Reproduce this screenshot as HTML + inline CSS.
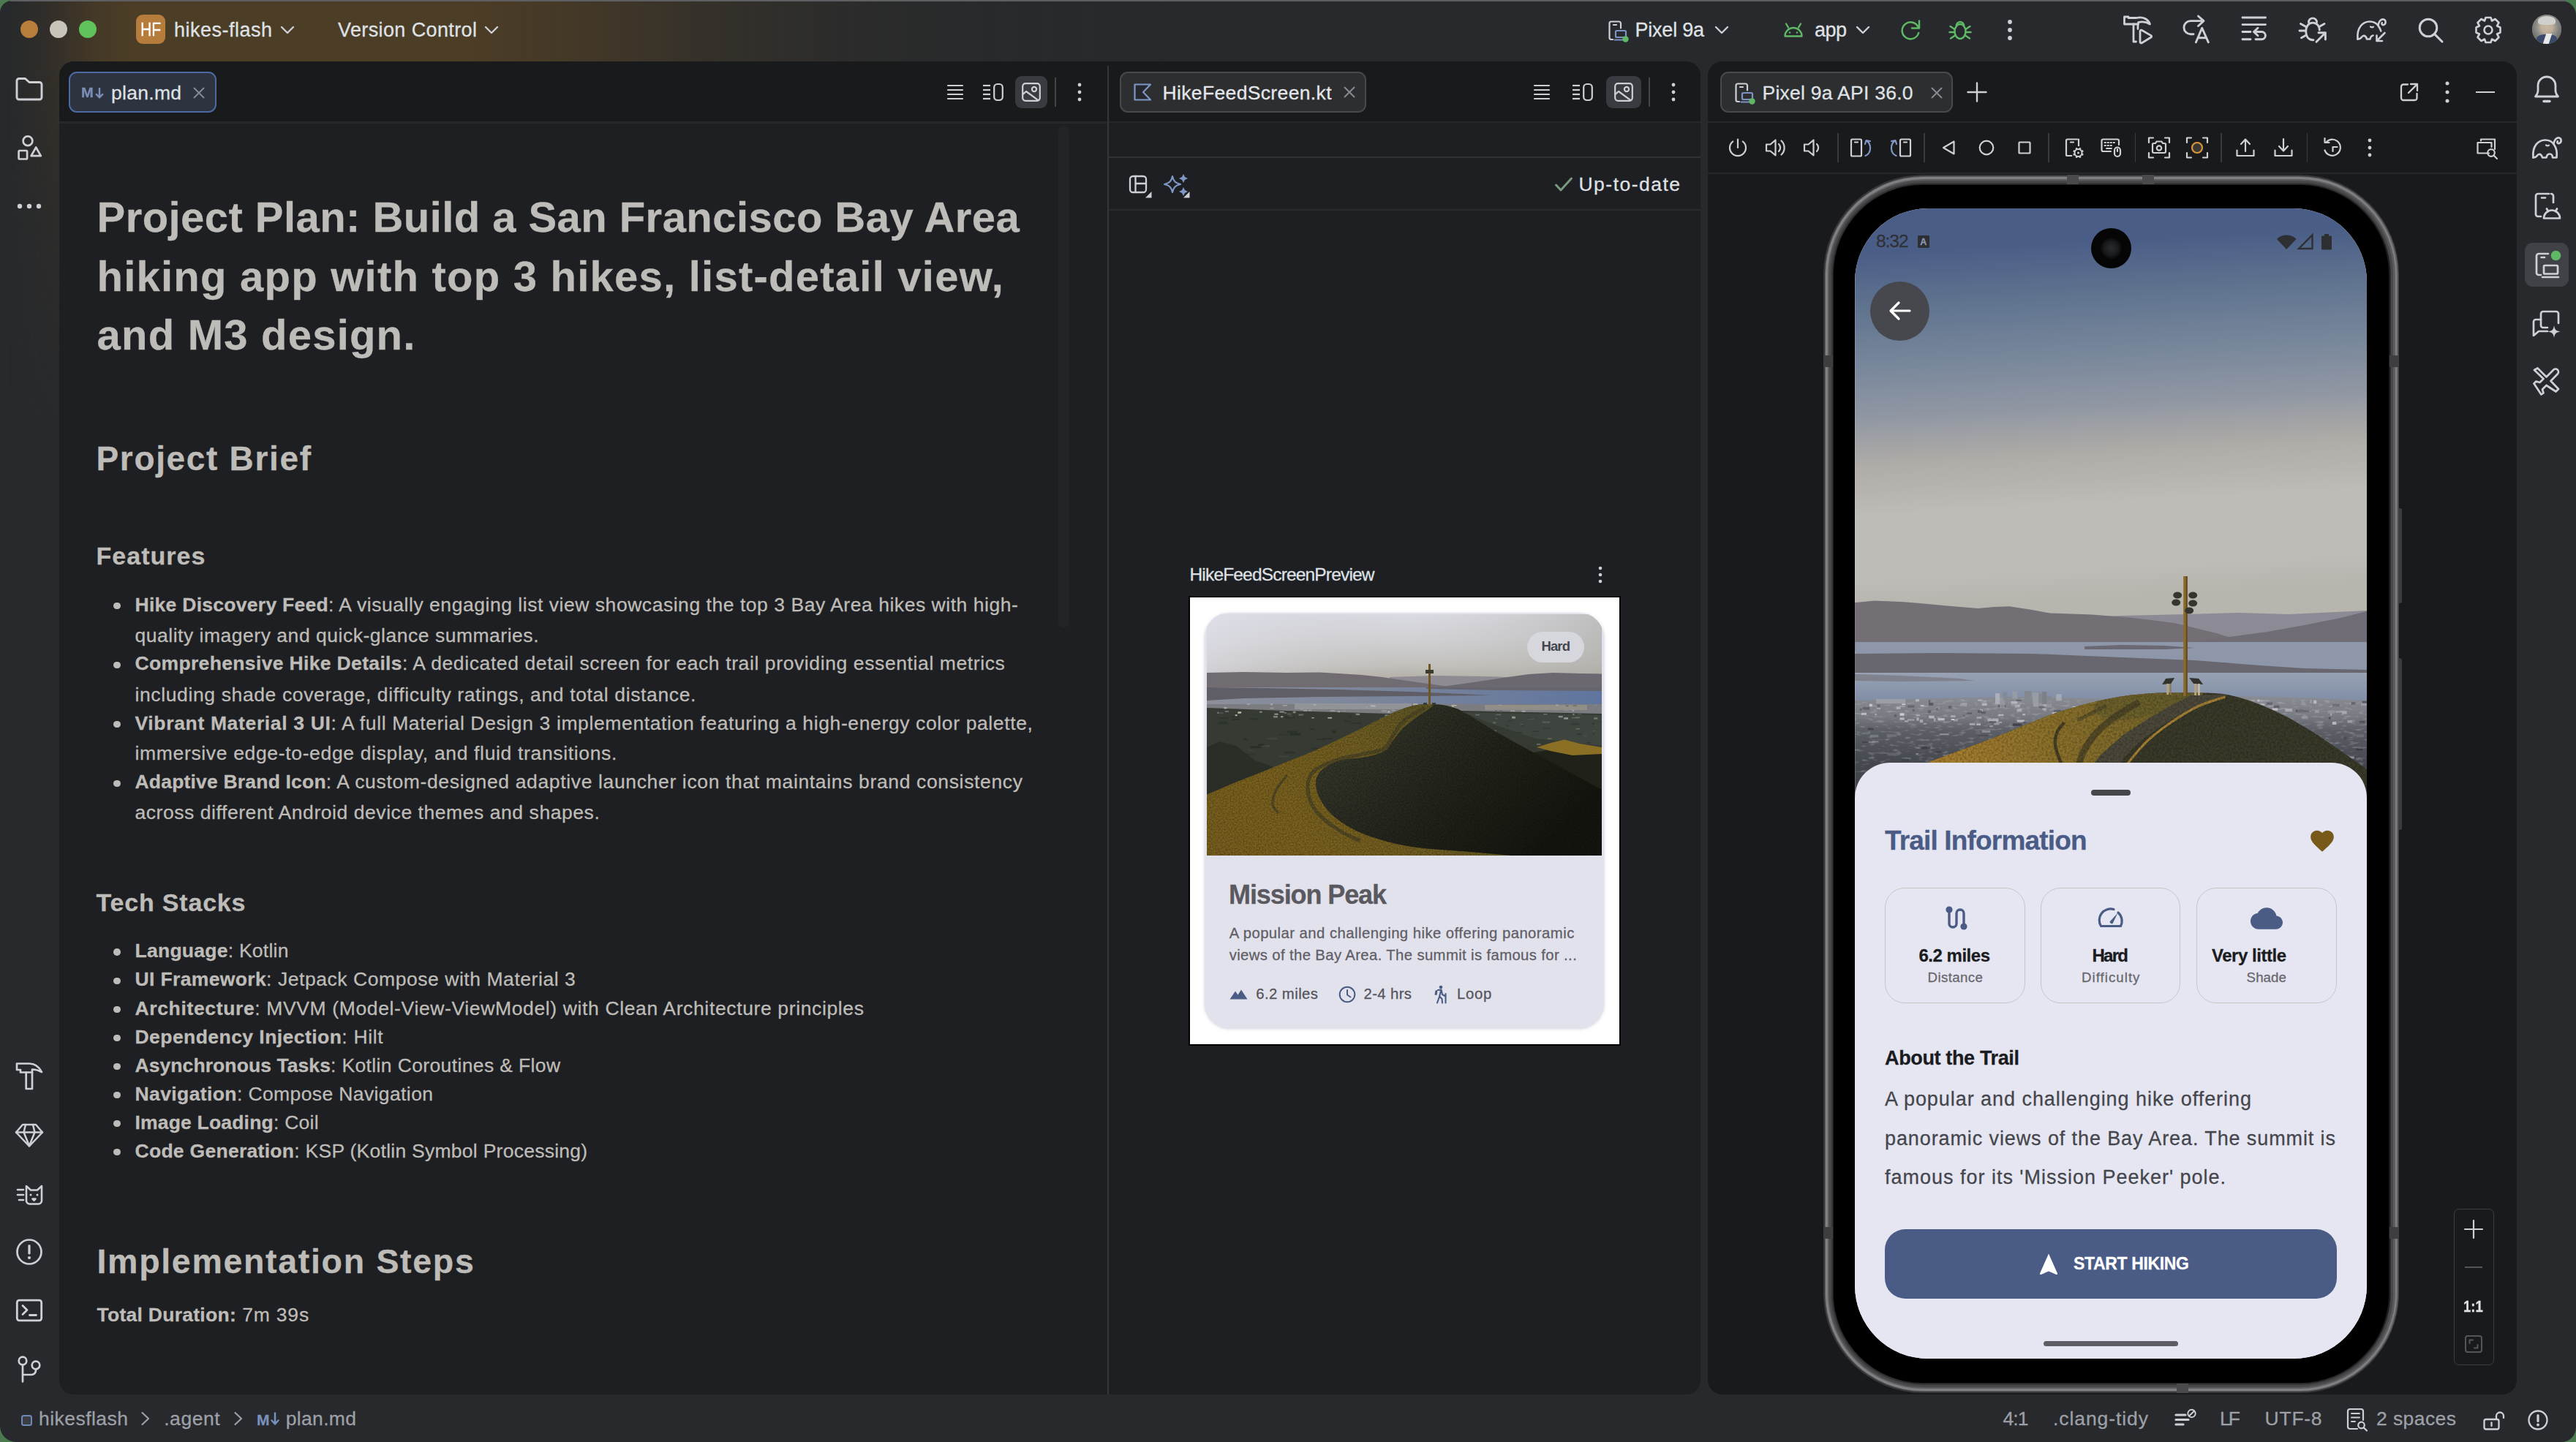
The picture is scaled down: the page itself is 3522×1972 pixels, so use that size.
<!DOCTYPE html><html><head><meta charset="utf-8"><title>IDE</title><style>
html,body{margin:0;padding:0}
body{width:3522px;height:1972px;overflow:hidden;background:#4a7a4e;font-family:"Liberation Sans",sans-serif;position:relative}
#win{position:absolute;left:0;top:1px;width:3522px;height:1971px;background:#27292c;border-radius:16px 20px 20px 22px}
#glow{position:absolute;left:0;top:1px;width:1700px;height:700px;border-radius:16px 0 0 0;
background:linear-gradient(to right,rgba(76,61,36,0) 10px,rgba(76,61,36,.3) 70px,rgba(76,61,38,.8) 130px,rgba(76,61,38,1) 175px,rgba(76,61,38,1) 640px,rgba(74,60,39,.8) 800px,rgba(68,58,40,.5) 960px,rgba(58,54,42,.25) 1150px,rgba(50,50,44,.1) 1350px,rgba(39,41,44,0) 1600px);
-webkit-mask-image:linear-gradient(to bottom,#000 0,#000 86px,rgba(0,0,0,.5) 300px,transparent 640px);mask-image:linear-gradient(to bottom,#000 0,#000 86px,rgba(0,0,0,.5) 300px,transparent 640px)}
.t{position:absolute;white-space:pre;line-height:1;-webkit-text-stroke:.28px currentColor}
.t b{font-weight:bold}
</style></head><body>
<!-- frame -->
<div id="win"></div>
<div id="glow"></div>
<div style="position:absolute;left:14.0px;top:0.0px;width:3494.0px;height:2.0px;background:#5e5f63;border-radius:2px"></div>
<div style="position:absolute;left:28.0px;top:28.0px;width:24.0px;height:24.0px;border-radius:50%;background:#b87d3b"></div>
<div style="position:absolute;left:68.0px;top:28.0px;width:24.0px;height:24.0px;border-radius:50%;background:#c9c4ba"></div>
<div style="position:absolute;left:108.0px;top:28.0px;width:24.0px;height:24.0px;border-radius:50%;background:#5fc25a"></div>
<div style="position:absolute;left:186.0px;top:20.0px;width:40.0px;height:40.0px;border-radius:9px;background:#b67c3c"></div>
<div class="t" style="left:191.5px;top:27.4px;font-size:26.50px;letter-spacing:0.000px;color:#ffffff;transform:scaleX(.8);transform-origin:0 0">HF</div>
<div class="t" style="left:238.0px;top:27.9px;font-size:27.00px;letter-spacing:0.495px;color:#dfe1e5;">hikes-flash</div>
<svg style="position:absolute;left:379.0px;top:27.0px" width="28" height="28" viewBox="-14.0 -14.0 28 28" fill="none" stroke="#ced0d6" stroke-width="2.40" stroke-linecap="round" stroke-linejoin="round" ><path d="M-8.0 -4.0 L0 4.0 L8.0 -4.0"/></svg>
<div class="t" style="left:462.0px;top:27.9px;font-size:27.00px;letter-spacing:0.386px;color:#dfe1e5;">Version Control</div>
<svg style="position:absolute;left:658.0px;top:27.0px" width="28" height="28" viewBox="-14.0 -14.0 28 28" fill="none" stroke="#ced0d6" stroke-width="2.40" stroke-linecap="round" stroke-linejoin="round" ><path d="M-8.0 -4.0 L0 4.0 L8.0 -4.0"/></svg>
<div style="position:absolute;left:81.0px;top:84.0px;width:2244.0px;height:1823.0px;background:#1e1f22;border-radius:20px"></div>
<div style="position:absolute;left:81px;top:84px;width:2244px;height:83px;background:#191a1c;border-radius:20px 20px 0 0"></div>
<div style="position:absolute;left:81.0px;top:166.0px;width:1433.0px;height:3.0px;background:#26282b"></div>
<div style="position:absolute;left:1516.0px;top:166.0px;width:809.0px;height:2.0px;background:#26282b"></div>
<div style="position:absolute;left:1514.0px;top:90.0px;width:2.0px;height:1817.0px;background:#34363a"></div>
<div style="position:absolute;left:1516.0px;top:214.0px;width:809.0px;height:2.0px;background:#303236"></div>
<div style="position:absolute;left:1516.0px;top:285.5px;width:809.0px;height:2.0px;background:#292b2e"></div>
<div style="position:absolute;left:2335.0px;top:84.0px;width:1106.0px;height:1823.0px;background:#191a1c;border-radius:20px"></div>
<div style="position:absolute;left:2335.0px;top:166.0px;width:1106.0px;height:2.0px;background:#26282b"></div>
<div style="position:absolute;left:2335.0px;top:235.5px;width:1106.0px;height:2.0px;background:#26282b"></div>
<!-- tabs -->
<div style="position:absolute;left:94.0px;top:98.0px;width:202.0px;height:56.0px;box-sizing:border-box;background:#2e3340;border:2px solid #4b6aa3;border-radius:11px"></div>
<div class="t" style="left:110.5px;top:117.2px;font-size:19.00px;letter-spacing:0.000px;color:#7b8fb6;transform:scaleX(1.06);transform-origin:0 0"><b>M</b></div>
<svg style="position:absolute;left:124.3px;top:115.0px" width="24" height="24" viewBox="-12.0 -12.0 24 24" fill="none" stroke="#7b8fb6" stroke-width="2.50" stroke-linecap="round" stroke-linejoin="round" ><path d="M0 -6 V6 M-4.2 2 L0 6.3 L4.2 2"/></svg>
<div class="t" style="left:152.0px;top:113.6px;font-size:26.50px;letter-spacing:0.287px;color:#dfe1e5;">plan.md</div>
<svg style="position:absolute;left:259.5px;top:114.5px" width="24" height="24" viewBox="-12.0 -12.0 24 24" fill="none" stroke="#868a91" stroke-width="2.00" stroke-linecap="round" stroke-linejoin="round" ><path d="M-6.5 -6.5 L6.5 6.5 M6.5 -6.5 L-6.5 6.5"/></svg>
<svg style="position:absolute;left:1290.0px;top:110.0px" width="32" height="32" viewBox="-16.0 -16.0 32 32" fill="none" stroke="#ced0d6" stroke-width="2.20" stroke-linecap="round" stroke-linejoin="round" stroke-linecap="butt"><path d="M-10.0 -9.0 H10.0"/><path d="M-10.0 -3.0 H10.0"/><path d="M-10.0 3.0 H10.0"/><path d="M-10.0 9.0 H10.0"/></svg>
<svg style="position:absolute;left:1342.0px;top:110.0px" width="32" height="32" viewBox="-2 -16 32 32" fill="none" stroke="#ced0d6" stroke-width="2.2" stroke-linecap="butt"><path d="M0 -9.0 H10"/><path d="M0 -3.0 H10"/><path d="M0 3.0 H10"/><path d="M0 9.0 H10"/><rect x="15.2" y="-11" width="11.6" height="22" rx="4.5"/></svg>
<div style="position:absolute;left:1388.0px;top:104.0px;width:44.0px;height:44.0px;background:#393b40;border-radius:9px"></div><svg style="position:absolute;left:1394.2px;top:110.0px" width="32" height="32" viewBox="-16.0 -16.0 32 32" fill="none" stroke="#ced0d6" stroke-width="2.20" stroke-linecap="round" stroke-linejoin="round" ><rect x="-11.8" y="-11.8" width="23.6" height="23.6" rx="4"/><circle cx="4" cy="-4" r="3.1"/><path d="M-11.5 2.8 L-7 -1 L9.5 11.2"/></svg>
<div style="position:absolute;left:1442.0px;top:106.0px;width:1.6px;height:40.0px;background:#43454a"></div>
<svg style="position:absolute;left:1460.0px;top:110.0px" width="32" height="32" viewBox="-16.0 -16.0 32 32" fill="none" stroke="#ced0d6" stroke-width="2.60" stroke-linecap="round" stroke-linejoin="round" ><circle cx="0" cy="-10" r="2.4" fill="#ced0d6" stroke="none"/><circle cx="0" cy="0" r="2.4" fill="#ced0d6" stroke="none"/><circle cx="0" cy="10" r="2.4" fill="#ced0d6" stroke="none"/></svg>
<div style="position:absolute;left:1447.0px;top:172.0px;width:15.0px;height:686.0px;background:#232427;border-radius:8px"></div>
<div style="position:absolute;left:1530.5px;top:98.0px;width:337.0px;height:56.0px;box-sizing:border-box;background:#2d2e30;border:2px solid #47494e;border-radius:11px"></div>
<svg style="position:absolute;left:1547.0px;top:111.0px" width="30" height="30" viewBox="-15.0 -15.0 30 30" fill="none" stroke="#7f97c5" stroke-width="2.20" stroke-linecap="round" stroke-linejoin="round" stroke-linejoin="miter"><path d="M11 -10.5 H-10.5 V10.5 H11 L1 0 Z" fill="#25282e"/></svg>
<div class="t" style="left:1589.5px;top:113.6px;font-size:26.50px;letter-spacing:0.353px;color:#e4e6ea;">HikeFeedScreen.kt</div>
<svg style="position:absolute;left:1832.5px;top:114.0px" width="24" height="24" viewBox="-12.0 -12.0 24 24" fill="none" stroke="#868a91" stroke-width="2.00" stroke-linecap="round" stroke-linejoin="round" ><path d="M-6.5 -6.5 L6.5 6.5 M6.5 -6.5 L-6.5 6.5"/></svg>
<svg style="position:absolute;left:2092.0px;top:110.0px" width="32" height="32" viewBox="-16.0 -16.0 32 32" fill="none" stroke="#ced0d6" stroke-width="2.20" stroke-linecap="round" stroke-linejoin="round" stroke-linecap="butt"><path d="M-10.0 -9.0 H10.0"/><path d="M-10.0 -3.0 H10.0"/><path d="M-10.0 3.0 H10.0"/><path d="M-10.0 9.0 H10.0"/></svg>
<svg style="position:absolute;left:2148.0px;top:110.0px" width="32" height="32" viewBox="-2 -16 32 32" fill="none" stroke="#ced0d6" stroke-width="2.2" stroke-linecap="butt"><path d="M0 -9.0 H10"/><path d="M0 -3.0 H10"/><path d="M0 3.0 H10"/><path d="M0 9.0 H10"/><rect x="15.2" y="-11" width="11.6" height="22" rx="4.5"/></svg>
<div style="position:absolute;left:2196.0px;top:104.0px;width:48.0px;height:44.0px;background:#393b40;border-radius:9px"></div><svg style="position:absolute;left:2204.2px;top:110.0px" width="32" height="32" viewBox="-16.0 -16.0 32 32" fill="none" stroke="#ced0d6" stroke-width="2.20" stroke-linecap="round" stroke-linejoin="round" ><rect x="-11.8" y="-11.8" width="23.6" height="23.6" rx="4"/><circle cx="4" cy="-4" r="3.1"/><path d="M-11.5 2.8 L-7 -1 L9.5 11.2"/></svg>
<div style="position:absolute;left:2254.3px;top:106.0px;width:1.6px;height:40.0px;background:#43454a"></div>
<svg style="position:absolute;left:2272.0px;top:110.0px" width="32" height="32" viewBox="-16.0 -16.0 32 32" fill="none" stroke="#ced0d6" stroke-width="2.60" stroke-linecap="round" stroke-linejoin="round" ><circle cx="0" cy="-10" r="2.4" fill="#ced0d6" stroke="none"/><circle cx="0" cy="0" r="2.4" fill="#ced0d6" stroke="none"/><circle cx="0" cy="10" r="2.4" fill="#ced0d6" stroke="none"/></svg>
<svg style="position:absolute;left:1539.7px;top:236.0px" width="32" height="32" viewBox="-16.0 -16.0 32 32" fill="none" stroke="#ced0d6" stroke-width="2.30" stroke-linecap="round" stroke-linejoin="round" ><rect x="-11" y="-11" width="22" height="22" rx="4"/><path d="M-3.5 -11 V11 M-3.5 -1 H11"/></svg>
<svg style="position:absolute;left:1566px;top:262px" width="10" height="10"><path d="M8.5 0 V8.5 H0 Z" fill="#ced0d6"/></svg>
<svg style="position:absolute;left:1589.0px;top:233.0px" width="40" height="40" viewBox="-20.0 -20.0 40 40" fill="none" stroke="#7f97c5" stroke-width="2.20" stroke-linecap="round" stroke-linejoin="round" ><path d="M-6 -12 C-4.5 -5 -2 -2.5 5 -1 C-2 0.5 -4.5 3 -6 10 C-7.5 3 -10 0.5 -17 -1 C-10 -2.5 -7.5 -5 -6 -12 Z"/><path d="M9 -15 L11 -11 L15 -9 L11 -7 L9 -3 L7 -7 L3 -9 L7 -11 Z" fill="#7f97c5" stroke="none"/><path d="M9 3 L11 7 L15 9 L11 11 L9 15 L7 11 L3 9 L7 7 Z" fill="#7f97c5" stroke="none"/></svg>
<svg style="position:absolute;left:1618px;top:262px" width="10" height="10"><path d="M8.5 0 V8.5 H0 Z" fill="#ced0d6"/></svg>
<svg style="position:absolute;left:2123.0px;top:237.0px" width="30" height="30" viewBox="-15.0 -15.0 30 30" fill="none" stroke="#7a9a80" stroke-width="3.00" stroke-linecap="round" stroke-linejoin="round" ><path d="M-10.5 1 L-4 8 L10.5 -8"/></svg>
<div class="t" style="left:2158.5px;top:239.1px;font-size:26.50px;letter-spacing:1.477px;color:#dfe1e5;">Up-to-date</div>
<div style="position:absolute;left:2352.0px;top:98.0px;width:318.0px;height:56.0px;box-sizing:border-box;background:#2d2e30;border:2px solid #47494e;border-radius:11px"></div>
<svg style="position:absolute;left:2366.5px;top:109.0px" width="36" height="36" viewBox="-18.0 -18.0 36 36" fill="none" stroke="#ced0d6" stroke-width="2.20" stroke-linecap="round" stroke-linejoin="round" ><path d="M-7 12 H-9 a2.5 2.5 0 0 1 -2.5 -2.5 V-10 a2.5 2.5 0 0 1 2.5 -2.5 H1.5 a2.5 2.5 0 0 1 2.5 2.5 V-3.5" stroke="#ced0d6"/><path d="M-6 -8 H-2" stroke="#ced0d6"/><rect x="-3" y="0" width="14" height="9" rx="1.5" stroke="#7d93c2"/><path d="M-4.5 12.5 H10" stroke="#7d93c2"/><circle cx="10.5" cy="11.5" r="4.2" fill="#5fb865" stroke="none"/></svg>
<div class="t" style="left:2409.5px;top:113.6px;font-size:26.50px;letter-spacing:0.261px;color:#dfe1e5;">Pixel 9a API 36.0</div>
<svg style="position:absolute;left:2636.0px;top:115.0px" width="24" height="24" viewBox="-12.0 -12.0 24 24" fill="none" stroke="#868a91" stroke-width="2.00" stroke-linecap="round" stroke-linejoin="round" ><path d="M-6.5 -6.5 L6.5 6.5 M6.5 -6.5 L-6.5 6.5"/></svg>
<svg style="position:absolute;left:2687.0px;top:109.5px" width="32" height="32" viewBox="-16.0 -16.0 32 32" fill="none" stroke="#ced0d6" stroke-width="2.40" stroke-linecap="round" stroke-linejoin="round" ><path d="M-12.5 0 H12.5 M0 -12.5 V12.5"/></svg>
<svg style="position:absolute;left:3278.0px;top:110.0px" width="32" height="32" viewBox="-16.0 -16.0 32 32" fill="none" stroke="#ced0d6" stroke-width="2.30" stroke-linecap="round" stroke-linejoin="round" ><path d="M-2 -10.5 H-8 a3 3 0 0 0 -3 3 V8 a3 3 0 0 0 3 3 H7.5 a3 3 0 0 0 3 -3 V2 M2 -11 H11 V-2 M11 -11 L-1 1"/></svg>
<svg style="position:absolute;left:3330.0px;top:110.0px" width="32" height="32" viewBox="-16.0 -16.0 32 32" fill="none" stroke="#ced0d6" stroke-width="2.60" stroke-linecap="round" stroke-linejoin="round" ><circle cx="0" cy="-12" r="2.5" fill="#ced0d6" stroke="none"/><circle cx="0" cy="0" r="2.5" fill="#ced0d6" stroke="none"/><circle cx="0" cy="12" r="2.5" fill="#ced0d6" stroke="none"/></svg>
<div style="position:absolute;left:3385.0px;top:124.8px;width:26.0px;height:2.4px;background:#ced0d6"></div>
<!-- icons -->
<svg style="position:absolute;left:2194.0px;top:23.5px" width="36" height="36" viewBox="-18.0 -18.0 36 36" fill="none" stroke="#ced0d6" stroke-width="2.20" stroke-linecap="round" stroke-linejoin="round" ><path d="M-7 12 H-9 a2.5 2.5 0 0 1 -2.5 -2.5 V-10 a2.5 2.5 0 0 1 2.5 -2.5 H1.5 a2.5 2.5 0 0 1 2.5 2.5 V-3.5" stroke="#ced0d6"/><path d="M-6 -8 H-2" stroke="#ced0d6"/><rect x="-3" y="0" width="14" height="9" rx="1.5" stroke="#7d93c2"/><path d="M-4.5 12.5 H10" stroke="#7d93c2"/><circle cx="10.5" cy="11.5" r="4.2" fill="#5fb865" stroke="none"/></svg>
<div class="t" style="left:2235.5px;top:28.1px;font-size:27.00px;letter-spacing:-0.222px;color:#dfe1e5;">Pixel 9a</div>
<svg style="position:absolute;left:2340.0px;top:27.0px" width="28" height="28" viewBox="-14.0 -14.0 28 28" fill="none" stroke="#ced0d6" stroke-width="2.40" stroke-linecap="round" stroke-linejoin="round" ><path d="M-8.0 -4.0 L0 4.0 L8.0 -4.0"/></svg>
<svg style="position:absolute;left:2434.0px;top:23.0px" width="36" height="36" viewBox="-18.0 -18.0 36 36" fill="none" stroke="#5fb865" stroke-width="2.40" stroke-linecap="round" stroke-linejoin="round" ><path d="M-11.5 8.5 A11.5 11.5 0 0 1 11.5 8.5 Z"/><path d="M-7 -3.5 L-10 -8.5 M7 -3.5 L10 -8.5"/><circle cx="-5" cy="3.5" r="1.3" fill="#5fb865" stroke="none"/><circle cx="5" cy="3.5" r="1.3" fill="#5fb865" stroke="none"/></svg>
<div class="t" style="left:2481.0px;top:28.1px;font-size:27.00px;letter-spacing:-0.524px;color:#dfe1e5;">app</div>
<svg style="position:absolute;left:2532.5px;top:27.0px" width="28" height="28" viewBox="-14.0 -14.0 28 28" fill="none" stroke="#ced0d6" stroke-width="2.40" stroke-linecap="round" stroke-linejoin="round" ><path d="M-8.0 -4.0 L0 4.0 L8.0 -4.0"/></svg>
<svg style="position:absolute;left:2594.0px;top:23.0px" width="36" height="36" viewBox="-18.0 -18.0 36 36" fill="none" stroke="#5fb865" stroke-width="2.50" stroke-linecap="round" stroke-linejoin="round" ><path d="M11 -3 A11.5 11.5 0 1 0 11.2 4 M12 -12.5 V-2.5 H2"/></svg>
<svg style="position:absolute;left:2660.0px;top:21.0px" width="40" height="40" viewBox="-20.0 -20.0 40 40" fill="none" stroke="#5fb865" stroke-width="2.50" stroke-linecap="round" stroke-linejoin="round" ><ellipse cx="0" cy="2" rx="7.5" ry="10"/><path d="M-5 -6 A5 5 0 0 1 5 -6"/><path d="M-7.5 -1 L-13.5 -5 M7.5 -1 L13.5 -5 M-7.5 3 H-14.5 M7.5 3 H14.5 M-7 7.5 L-13 11.5 M7 7.5 L13 11.5"/></svg>
<svg style="position:absolute;left:2732.0px;top:25.0px" width="32" height="32" viewBox="-16.0 -16.0 32 32" fill="none" stroke="#ced0d6" stroke-width="2.60" stroke-linecap="round" stroke-linejoin="round" ><circle cx="0" cy="-11" r="2.9" fill="#ced0d6" stroke="none"/><circle cx="0" cy="0" r="2.9" fill="#ced0d6" stroke="none"/><circle cx="0" cy="11" r="2.9" fill="#ced0d6" stroke="none"/></svg>
<svg style="position:absolute;left:2899.0px;top:17.0px" width="48" height="48" viewBox="-24.0 -24.0 48 48" fill="none" stroke="#ced0d6" stroke-width="2.80" stroke-linecap="round" stroke-linejoin="round" ><path d="M-18.5 -18 H-13 V-16.5 H-2 C7 -18.5 14 -15 16.5 -8 C11 -11.5 5 -11.5 0.5 -10.5 V-8 H-18.5 Z"/><path d="M-6 -8 V16 H-2.5 M0 -8 V-1.5"/><path d="M3 1.5 V16.5 a1.5 1.5 0 0 0 2.3 1.2 L18 10 a1.4 1.4 0 0 0 0 -2.4 L5.3 0.3 A1.5 1.5 0 0 0 3 1.5 Z"/></svg>
<svg style="position:absolute;left:2978.0px;top:17.0px" width="48" height="48" viewBox="-24.0 -24.0 48 48" fill="none" stroke="#ced0d6" stroke-width="2.90" stroke-linecap="round" stroke-linejoin="round" ><path d="M3.5 -19 L11 -12.4 L3.5 -5.5 M10.5 -12.4 H-7 a9.05 9.05 0 0 0 0 18.1 H-3"/><path d="M0.4 16.8 L8.7 -2.6 L17.4 16.8 M3.2 10.8 H14.4"/></svg>
<svg style="position:absolute;left:3058.0px;top:17.0px" width="48" height="48" viewBox="-24.0 -24.0 48 48" fill="none" stroke="#ced0d6" stroke-width="2.90" stroke-linecap="round" stroke-linejoin="round" ><path d="M-16 -17 H15.5 M-16 -7.4 H15.5 M-16 2.5 H-5 M-16 12.7 H-5"/><path d="M5 -2.7 L-0.5 2.5 L5 7.7 M-0.5 2.5 H10.3 a5.1 5.1 0 0 1 0 10.2 H2"/></svg>
<svg style="position:absolute;left:3138.0px;top:17.0px" width="48" height="48" viewBox="-24.0 -24.0 48 48" fill="none" stroke="#ced0d6" stroke-width="2.90" stroke-linecap="round" stroke-linejoin="round" ><path d="M1 13.7 C-6.5 13.7 -9.3 8 -9.3 2 C-9.3 -4.5 -6 -9.9 0 -9.9 C6 -9.9 9.3 -5 9.3 0"/><path d="M-5.6 -10.5 A5.6 5.6 0 0 1 5.6 -10.5"/><path d="M-9.3 -4.5 L-16.5 -8.5 M9 -4.5 L16 -8.5 M-9.3 1 H-18 M-8.8 7 L-15.5 10.8"/><path d="M5 16.2 L17.4 3.8 M8 3.8 H17.4 V13.1"/></svg>
<svg style="position:absolute;left:3218.0px;top:17.0px" width="48" height="48" viewBox="-24.0 -24.0 48 48" fill="none" stroke="#ced0d6" stroke-width="2.60" stroke-linecap="round" stroke-linejoin="round" ><path d="M-18.5 12.5 C-20 -3 -12 -11.5 -2 -11.5 C3 -11.5 7 -9.5 9.5 -6 C10 -11 13 -15.5 17 -14.5 C20.5 -13.5 20.5 -8 17 -7 C15 -6.5 13.8 -8 14.8 -9.8"/><path d="M9.5 -6 C11.5 -3 12.8 -0.5 13.3 1.5 M-18.5 12.5 C-13 12.5 -13.5 8.5 -10.8 8 C-8.5 7.5 -6.5 9.5 -6 12.5 H-1.5 C-1 9.8 0.5 8 2.5 7.6"/><path d="M18.5 4 L7.5 15 M7.5 7.5 V15 H15"/><path d="M-1 -4.5 C0.5 -3.5 2 -3.5 3 -4.3" stroke-width="2.2"/></svg>
<svg style="position:absolute;left:3301.0px;top:19.0px" width="44" height="44" viewBox="-22.0 -22.0 44 44" fill="none" stroke="#ced0d6" stroke-width="3.00" stroke-linecap="round" stroke-linejoin="round" ><circle cx="-3" cy="-3" r="11.8"/><path d="M5.6 5.6 L16 16"/></svg>
<svg style="position:absolute;left:3380.0px;top:19.0px" width="44" height="44" viewBox="-22.0 -22.0 44 44" fill="none" stroke="#ced0d6" stroke-width="2.60" stroke-linecap="round" stroke-linejoin="round" ><path d="M-3.5 -17 H3.5 L5 -12.5 L9.5 -15 L14.5 -10 L12 -5.5 L16.5 -3.5 V3.5 L12 5.5 L14.5 10 L9.5 15 L5 12.5 L3.5 17 H-3.5 L-5 12.5 L-9.5 15 L-14.5 10 L-12 5.5 L-16.5 3.5 V-3.5 L-12 -5.5 L-14.5 -10 L-9.5 -15 L-5 -12.5 Z" stroke-linejoin="round"/><circle cx="0" cy="0" r="5.5"/></svg>
<div style="position:absolute;left:3462px;top:20px;width:40px;height:40px;border-radius:50%;overflow:hidden;background:#8a8a86"><div style="position:absolute;left:0;top:0;width:40px;height:40px;background:radial-gradient(circle at 50% 42%,#c9b8a2 0,#bfae99 26%,#8f8f8c 45%,#6f706c 70%,#5b6a52 100%)"></div><div style="position:absolute;left:8px;top:2px;width:24px;height:12px;border-radius:50% 50% 30% 30%;background:#cfcfcb"></div><div style="position:absolute;left:6px;top:27px;width:28px;height:16px;border-radius:40% 40% 0 0;background:#3b4a6a"></div><div style="position:absolute;left:17px;top:26px;width:8px;height:14px;background:#e9e9ea;transform:skewX(-18deg)"></div></div>
<svg style="position:absolute;left:18.0px;top:100.0px" width="44" height="44" viewBox="-22.0 -22.0 44 44" fill="none" stroke="#ced0d6" stroke-width="2.90" stroke-linecap="round" stroke-linejoin="round" ><path d="M-17 -11.5 a3 3 0 0 1 3 -3 h8.5 l5.5 5 h14 a3 3 0 0 1 3 3 v17.5 a3 3 0 0 1 -3 3 h-28 a3 3 0 0 1 -3 -3 z"/></svg>
<svg style="position:absolute;left:18.0px;top:179.0px" width="44" height="44" viewBox="-22.0 -22.0 44 44" fill="none" stroke="#ced0d6" stroke-width="2.70" stroke-linecap="round" stroke-linejoin="round" ><circle cx="-2" cy="-8.2" r="6.4"/><rect x="-14.4" y="5" width="11.5" height="11.5" rx="1.2"/><path d="M9.2 0.5 L15.8 12.2 H2.6 Z"/></svg>
<svg style="position:absolute;left:18.0px;top:260.0px" width="44" height="44" viewBox="-22.0 -22.0 44 44" fill="none" stroke="#ced0d6" stroke-width="2.60" stroke-linecap="round" stroke-linejoin="round" ><circle cx="-13" cy="0" r="3.2" fill="#ced0d6" stroke="none"/><circle cx="0" cy="0" r="3.2" fill="#ced0d6" stroke="none"/><circle cx="13" cy="0" r="3.2" fill="#ced0d6" stroke="none"/></svg>
<svg style="position:absolute;left:18.0px;top:1450.0px" width="44" height="44" viewBox="-22.0 -22.0 44 44" fill="none" stroke="#ced0d6" stroke-width="2.70" stroke-linecap="round" stroke-linejoin="round" ><path d="M-17 -17.5 H0 C7.5 -17.5 13.5 -13 17 -6 C12.5 -8.5 8 -9.5 4 -9.5 V-5.5 H-12 V-9 H-17 Z"/><path d="M-4.3 -5.5 V17 H4 V-5.5"/></svg>
<svg style="position:absolute;left:18.0px;top:1530.0px" width="44" height="44" viewBox="-22.0 -22.0 44 44" fill="none" stroke="#ced0d6" stroke-width="2.50" stroke-linecap="round" stroke-linejoin="round" ><path d="M-9 -14 H9 L18 -3.5 L0 15.5 L-18 -3.5 Z"/><path d="M-18 -3.5 H18 M-5 -14 L-7.5 -3.5 L0 15 L7.5 -3.5 L5 -14"/></svg>
<svg style="position:absolute;left:18.0px;top:1612.0px" width="44" height="44" viewBox="-22.0 -22.0 44 44" fill="none" stroke="#ced0d6" stroke-width="2.60" stroke-linecap="round" stroke-linejoin="round" ><path d="M-4 -12 L2 -6.5 H11 L17 -12 V8 a4.5 4.5 0 0 1 -4.5 4.5 H0.5 a4.5 4.5 0 0 1 -4.5 -4.5 Z"/><circle cx="2" cy="0" r="1.5" fill="#ced0d6" stroke="none"/><circle cx="11" cy="0" r="1.5" fill="#ced0d6" stroke="none"/><path d="M4.5 5.5 L6.5 7.5 L8.5 5.5 Z" fill="#ced0d6"/><path d="M-16 -7 H-8 M-16 0 H-8 M-14 7 H-8"/></svg>
<svg style="position:absolute;left:18.0px;top:1690.0px" width="44" height="44" viewBox="-22.0 -22.0 44 44" fill="none" stroke="#ced0d6" stroke-width="2.70" stroke-linecap="round" stroke-linejoin="round" ><circle cx="0" cy="0" r="16.5"/><path d="M0 -8.5 V2" stroke-width="3.2"/><circle cx="0" cy="8" r="2.1" fill="#ced0d6" stroke="none"/></svg>
<svg style="position:absolute;left:18.0px;top:1770.0px" width="44" height="44" viewBox="-22.0 -22.0 44 44" fill="none" stroke="#ced0d6" stroke-width="2.80" stroke-linecap="round" stroke-linejoin="round" ><rect x="-16.7" y="-13.8" width="33.4" height="27.6" rx="3"/><path d="M-9 -6.5 L-3 -0.5 L-9 5.5 M0.5 6.5 H9.5"/></svg>
<svg style="position:absolute;left:18.0px;top:1850.0px" width="44" height="44" viewBox="-22.0 -22.0 44 44" fill="none" stroke="#ced0d6" stroke-width="2.70" stroke-linecap="round" stroke-linejoin="round" ><circle cx="-9" cy="-11" r="5.3"/><circle cx="9" cy="-5" r="5.3"/><path d="M-9 -5.5 V17.5 M9 0.5 V2 a6 6 0 0 1 -6 6 H-9"/></svg>
<svg style="position:absolute;left:3460.0px;top:100.0px" width="44" height="44" viewBox="-22.0 -22.0 44 44" fill="none" stroke="#ced0d6" stroke-width="2.80" stroke-linecap="round" stroke-linejoin="round" ><path d="M-15.5 10 C-11 5 -12 1 -12 -5 a12 12 0 0 1 24 0 C12 1 11 5 15.5 10 Z"/><path d="M-4 16.5 H4" stroke-width="3.4"/></svg>
<svg style="position:absolute;left:3458.0px;top:178.5px" width="48" height="48" viewBox="-24.0 -24.0 48 48" fill="none" stroke="#ced0d6" stroke-width="2.70" stroke-linecap="round" stroke-linejoin="round" ><path d="M-18.5 12.5 C-20 -3 -12 -11.5 -2 -11.5 C3 -11.5 7 -9.5 9.5 -6 C10 -11 13 -15.5 17 -14.5 C20.5 -13.5 20.5 -8 17 -7 C15 -6.5 13.8 -8 14.8 -9.8"/><path d="M9.5 -6 C13 -1 14.5 6 13.5 12.5 H8 C8 9.5 6.3 7.5 4 7.5 C1.7 7.5 0 9.5 -0.5 12.5 H-6 C-6.5 9.5 -8.5 7.5 -10.8 8 C-13.5 8.5 -13 12.5 -18.5 12.5"/><path d="M-1 -4.5 C0.5 -3.5 2 -3.5 3 -4.3" stroke-width="2.2"/></svg>
<svg style="position:absolute;left:3458.0px;top:258.0px" width="48" height="48" viewBox="-24.0 -24.0 48 48" fill="none" stroke="#ced0d6" stroke-width="2.70" stroke-linecap="round" stroke-linejoin="round" ><path d="M3 -17 H-12 a3 3 0 0 0 -3 3 V11 a3 3 0 0 0 3 3 H-8 M-7 -11.5 H-2 M6 -17 a3 3 0 0 1 3 3 V-5"/><path d="M-4 16.5 A11 11 0 0 1 18 16.5 Z"/><path d="M2 7 L0 3.5 M12 7 L14 3.5"/></svg>
<div style="position:absolute;left:3452.0px;top:332.0px;width:60.0px;height:60.0px;background:#404247;border-radius:11px"></div>
<svg style="position:absolute;left:3458.0px;top:338.0px" width="48" height="48" viewBox="-24.0 -24.0 48 48" fill="none" stroke="#ced0d6" stroke-width="2.70" stroke-linecap="round" stroke-linejoin="round" ><path d="M2 -15 H-11 a3 3 0 0 0 -3 3 V11 a3 3 0 0 0 3 3 H-8 M-7.5 -10 H-3"/><rect x="-4" y="1" width="19" height="11.5" rx="1.5"/><path d="M-6 17 H16"/><circle cx="12.5" cy="-12.5" r="6.8" fill="#5fb865" stroke="none"/></svg>
<svg style="position:absolute;left:3457.0px;top:418.0px" width="48" height="48" viewBox="-24.0 -24.0 48 48" fill="none" stroke="#ced0d6" stroke-width="2.70" stroke-linecap="round" stroke-linejoin="round" ><path d="M-7 -5 V-13 a3 3 0 0 1 3 -3 H14 a3 3 0 0 1 3 3 V0 M-7 -5 H-14 a3 3 0 0 0 -3 3 V17 L-10 11 H2"/><path d="M-7 -5 V3 a3 3 0 0 0 3 3 H2"/><path d="M11 3 C12 9 13.5 10.5 19.5 11.5 C13.5 12.5 12 14 11 20 C10 14 8.5 12.5 2.5 11.5 C8.5 10.5 10 9 11 3 Z" fill="#ced0d6" stroke="none"/></svg>
<svg style="position:absolute;left:3457.0px;top:496.0px" width="48" height="48" viewBox="-24.0 -24.0 48 48" fill="none" stroke="#ced0d6" stroke-width="2.70" stroke-linecap="round" stroke-linejoin="round" ><path d="M-16 -14 L-11.5 -16.5 L0.5 -4.5 L10 -14 a3.6 3.6 0 0 1 6 5.2 L6.5 1 L17 12 L13.5 15.5 L0.5 7 L-5 12.5 L-3.5 17.5 L-6.5 19.5 L-16.5 4.5 L-13.5 1.5 L-8.5 3 L-3.5 -2 Z"/></svg>
<svg style="position:absolute;left:2358.0px;top:184.0px" width="36" height="36" viewBox="-18.0 -18.0 36 36" fill="none" stroke="#ced0d6" stroke-width="2.20" stroke-linecap="round" stroke-linejoin="round" ><path d="M0 -11.5 V0"/><path d="M-6.8 -8.5 A11 11 0 1 0 6.8 -8.5"/></svg>
<svg style="position:absolute;left:2409.0px;top:184.0px" width="36" height="36" viewBox="-18.0 -18.0 36 36" fill="none" stroke="#ced0d6" stroke-width="2.20" stroke-linecap="round" stroke-linejoin="round" ><path d="M-12 -4.5 H-6.5 L0.5 -10.5 V10.5 L-6.5 4.5 H-12 Z"/><path d="M5 -5 A7 7 0 0 1 5 5 M8.5 -9.5 A13 13 0 0 1 8.5 9.5"/></svg>
<svg style="position:absolute;left:2461.0px;top:184.0px" width="36" height="36" viewBox="-18.0 -18.0 36 36" fill="none" stroke="#ced0d6" stroke-width="2.20" stroke-linecap="round" stroke-linejoin="round" ><path d="M-12 -4.5 H-6.5 L0.5 -10.5 V10.5 L-6.5 4.5 H-12 Z"/><path d="M5 -5 A7 7 0 0 1 5 5"/></svg>
<div style="position:absolute;left:2512.2px;top:182.0px;width:1.6px;height:40.0px;background:#393b40"></div>
<svg style="position:absolute;left:2527.0px;top:184.0px" width="36" height="36" viewBox="-18.0 -18.0 36 36" fill="none" stroke="#ced0d6" stroke-width="2.20" stroke-linecap="round" stroke-linejoin="round" ><rect x="-14" y="-11.5" width="14" height="23" rx="1.5"/><path d="M-9 -7.5 H-5"/><path d="M5.5 11 C14 7 14 -5 7 -9.5 M5 -5 L6.5 -10 L12 -9" stroke="#7f97c5"/></svg>
<svg style="position:absolute;left:2580.0px;top:184.0px" width="36" height="36" viewBox="-18.0 -18.0 36 36" fill="none" stroke="#ced0d6" stroke-width="2.20" stroke-linecap="round" stroke-linejoin="round" ><rect x="0" y="-11.5" width="14" height="23" rx="1.5"/><path d="M5 -7.5 H9"/><path d="M-5.5 11 C-14 7 -14 -5 -7 -9.5 M-5 -5 L-6.5 -10 L-12 -9" stroke="#7f97c5"/></svg>
<div style="position:absolute;left:2630.2px;top:182.0px;width:1.6px;height:40.0px;background:#393b40"></div>
<svg style="position:absolute;left:2647.0px;top:184.0px" width="36" height="36" viewBox="-18.0 -18.0 36 36" fill="none" stroke="#ced0d6" stroke-width="2.20" stroke-linecap="round" stroke-linejoin="round" ><path d="M6.5 -8.5 V8.5 L-8 0 Z"/></svg>
<svg style="position:absolute;left:2698.0px;top:184.0px" width="36" height="36" viewBox="-18.0 -18.0 36 36" fill="none" stroke="#ced0d6" stroke-width="2.20" stroke-linecap="round" stroke-linejoin="round" ><circle cx="0" cy="0" r="9.3"/></svg>
<svg style="position:absolute;left:2750.0px;top:184.0px" width="36" height="36" viewBox="-18.0 -18.0 36 36" fill="none" stroke="#ced0d6" stroke-width="2.20" stroke-linecap="round" stroke-linejoin="round" ><rect x="-7.5" y="-7.5" width="15" height="15" rx="0.8"/></svg>
<div style="position:absolute;left:2800.2px;top:182.0px;width:1.6px;height:40.0px;background:#393b40"></div>
<svg style="position:absolute;left:2816.0px;top:182.0px" width="40" height="40" viewBox="-20.0 -20.0 40 40" fill="none" stroke="#ced0d6" stroke-width="2.20" stroke-linecap="round" stroke-linejoin="round" ><path d="M4 -11.5 H-9.5 a1.5 1.5 0 0 0 -1.5 1.5 V9.5 a1.5 1.5 0 0 0 1.5 1.5 H-3.5 M-5 -7.5 H-1 M6 -11.5 V-2.5"/><circle cx="5.5" cy="7" r="9" fill="#191a1c" stroke="none"/><circle cx="5.5" cy="7" r="5" stroke-width="2"/><path d="M10.12 8.91 L12.24 9.79 M7.41 11.62 L8.29 13.74 M3.59 11.62 L2.71 13.74 M0.88 8.91 L-1.24 9.79 M0.88 5.09 L-1.24 4.21 M3.59 2.38 L2.71 0.26 M7.41 2.38 L8.29 0.26 M10.12 5.09 L12.24 4.21 " stroke-width="2.6" stroke-linecap="butt"/><circle cx="5.5" cy="7" r="1.5" fill="#ced0d6" stroke="none"/></svg>
<svg style="position:absolute;left:2866.0px;top:182.0px" width="40" height="40" viewBox="-20.0 -20.0 40 40" fill="none" stroke="#ced0d6" stroke-width="2.20" stroke-linecap="round" stroke-linejoin="round" ><path d="M0 5 H-10.5 a2 2 0 0 1 -2 -2 V-9.5 a2 2 0 0 1 2 -2 H9 a2 2 0 0 1 2 2 V-4"/><path d="M-8.5 -7 H-7 M-4.5 -7 H-3 M-0.5 -7 H1 M3.5 -7 H5 M-8.5 -3 H-7 M-4.5 -3 H-3 M-0.5 -3 H1 M-6 1 H1" stroke-width="1.9"/><rect x="5" y="-0.5" width="8" height="12.5" rx="4"/><path d="M9 2 V5"/></svg>
<div style="position:absolute;left:2918.5px;top:182.0px;width:1.6px;height:40.0px;background:#393b40"></div>
<svg style="position:absolute;left:2932.0px;top:182.0px" width="40" height="40" viewBox="-20.0 -20.0 40 40" fill="none" stroke="#ced0d6" stroke-width="2.20" stroke-linecap="round" stroke-linejoin="round" ><path d="M-14 -7 V-13.5 H-8 M8 -13.5 H14 V-7 M14 7 V13.5 H8 M-8 13.5 H-14 V7"/><path d="M-9 -4.5 a1.5 1.5 0 0 1 1.5 -1.5 H-5 L-3.5 -8.5 H3.5 L5 -6 H7.5 a1.5 1.5 0 0 1 1.5 1.5 V5.5 a1.5 1.5 0 0 1 -1.5 1.5 H-7.5 a1.5 1.5 0 0 1 -1.5 -1.5 Z"/><circle cx="0" cy="0.5" r="3.2"/></svg>
<svg style="position:absolute;left:2984.0px;top:182.0px" width="40" height="40" viewBox="-20.0 -20.0 40 40" fill="none" stroke="#ced0d6" stroke-width="2.20" stroke-linecap="round" stroke-linejoin="round" ><path d="M-14 -7 V-13.5 H-8 M8 -13.5 H14 V-7 M14 7 V13.5 H8 M-8 13.5 H-14 V7"/><circle cx="0" cy="0" r="7" stroke="#d9963a" fill="#3a3832"/></svg>
<div style="position:absolute;left:3036.2px;top:182.0px;width:1.6px;height:40.0px;background:#393b40"></div>
<svg style="position:absolute;left:3052.0px;top:184.0px" width="36" height="36" viewBox="-18.0 -18.0 36 36" fill="none" stroke="#ced0d6" stroke-width="2.20" stroke-linecap="round" stroke-linejoin="round" stroke-linecap="butt" stroke-linejoin="miter"><path d="M-11.5 3.5 V11 H11.5 V3.5"/><path d="M0 5 V-11 M-6 -5 L0 -11.5 L6 -5"/></svg>
<svg style="position:absolute;left:3104.0px;top:184.0px" width="36" height="36" viewBox="-18.0 -18.0 36 36" fill="none" stroke="#ced0d6" stroke-width="2.20" stroke-linecap="round" stroke-linejoin="round" stroke-linecap="butt" stroke-linejoin="miter"><path d="M-11.5 3.5 V11 H11.5 V3.5"/><path d="M0 -12 V4 M-6 -2 L0 4.5 L6 -2"/></svg>
<div style="position:absolute;left:3153.9px;top:182.0px;width:1.6px;height:40.0px;background:#393b40"></div>
<svg style="position:absolute;left:3170.5px;top:184.0px" width="36" height="36" viewBox="-18.0 -18.0 36 36" fill="none" stroke="#ced0d6" stroke-width="2.20" stroke-linecap="round" stroke-linejoin="round" ><path d="M-8 -8 A11 11 0 1 1 -10.5 3.5 M-10.5 -13 V-7 H-4.5 M0.5 5 V-1 H6.5"/></svg>
<svg style="position:absolute;left:3224.0px;top:186.0px" width="32" height="32" viewBox="-16.0 -16.0 32 32" fill="none" stroke="#ced0d6" stroke-width="2.60" stroke-linecap="round" stroke-linejoin="round" ><circle cx="0" cy="-10" r="2.4" fill="#ced0d6" stroke="none"/><circle cx="0" cy="0" r="2.4" fill="#ced0d6" stroke="none"/><circle cx="0" cy="10" r="2.4" fill="#ced0d6" stroke="none"/></svg>
<svg style="position:absolute;left:3380.0px;top:183.0px" width="40" height="40" viewBox="-20.0 -20.0 40 40" fill="none" stroke="#ced0d6" stroke-width="2.20" stroke-linecap="round" stroke-linejoin="round" ><path d="M-8 -10.5 V-12.5 H11 V1"/><path d="M3 6.5 H-12.5 V-8 H6.5 V-2"/><circle cx="6" cy="6" r="4.8"/><path d="M9.5 9.5 L14 14"/></svg>
<!-- doc -->
<div class="t" style="left:132.5px;top:267.8px;font-size:58.00px;letter-spacing:0.448px;color:#bebcb8;"><b>Project Plan: Build a San Francisco Bay Area</b></div>
<div class="t" style="left:132.5px;top:348.5px;font-size:58.00px;letter-spacing:1.237px;color:#bebcb8;"><b>hiking app with top 3 hikes, list-detail view,</b></div>
<div class="t" style="left:132.5px;top:429.2px;font-size:58.00px;letter-spacing:1.227px;color:#bebcb8;"><b>and M3 design.</b></div>
<div class="t" style="left:131.5px;top:603.7px;font-size:46.00px;letter-spacing:1.664px;color:#bebcb8;"><b>Project Brief</b></div>
<div class="t" style="left:131.5px;top:743.2px;font-size:34.00px;letter-spacing:1.025px;color:#bebcb8;"><b>Features</b></div>
<div class="t" style="left:184.5px;top:813.8px;font-size:26.50px;color:#bebcb8;"><b style="letter-spacing:0.277px">Hike Discovery Feed</b><span style="letter-spacing:0.537px">: A visually engaging list view showcasing the top 3 Bay Area hikes with high-</span></div>
<div style="position:absolute;left:155.3px;top:823.9px;width:9.4px;height:9.4px;border-radius:50%;background:#bebcb8"></div>
<div class="t" style="left:184.5px;top:855.7px;font-size:26.50px;color:#bebcb8;"><span style="letter-spacing:0.518px">quality imagery and quick-glance summaries.</span></div>
<div class="t" style="left:184.5px;top:894.4px;font-size:26.50px;color:#bebcb8;"><b style="letter-spacing:0.345px">Comprehensive Hike Details</b><span style="letter-spacing:0.606px">: A dedicated detail screen for each trail providing essential metrics</span></div>
<div style="position:absolute;left:155.3px;top:904.5px;width:9.4px;height:9.4px;border-radius:50%;background:#bebcb8"></div>
<div class="t" style="left:184.5px;top:936.6px;font-size:26.50px;color:#bebcb8;"><span style="letter-spacing:0.619px">including shade coverage, difficulty ratings, and total distance.</span></div>
<div class="t" style="left:184.5px;top:975.5px;font-size:26.50px;color:#bebcb8;"><b style="letter-spacing:0.653px">Vibrant Material 3 UI</b><span style="letter-spacing:0.621px">: A full Material Design 3 implementation featuring a high-energy color palette,</span></div>
<div style="position:absolute;left:155.3px;top:985.6px;width:9.4px;height:9.4px;border-radius:50%;background:#bebcb8"></div>
<div class="t" style="left:184.5px;top:1017.2px;font-size:26.50px;color:#bebcb8;"><span style="letter-spacing:0.657px">immersive edge-to-edge display, and fluid transitions.</span></div>
<div class="t" style="left:184.5px;top:1056.4px;font-size:26.50px;color:#bebcb8;"><b style="letter-spacing:0.191px">Adaptive Brand Icon</b><span style="letter-spacing:0.644px">: A custom-designed adaptive launcher icon that maintains brand consistency</span></div>
<div style="position:absolute;left:155.3px;top:1066.5px;width:9.4px;height:9.4px;border-radius:50%;background:#bebcb8"></div>
<div class="t" style="left:184.5px;top:1098.3px;font-size:26.50px;color:#bebcb8;"><span style="letter-spacing:0.558px">across different Android device themes and shapes.</span></div>
<div class="t" style="left:131.5px;top:1216.8px;font-size:34.00px;letter-spacing:0.808px;color:#bebcb8;"><b>Tech Stacks</b></div>
<div class="t" style="left:184.5px;top:1287.3px;font-size:26.50px;color:#bebcb8;"><b style="letter-spacing:0.256px">Language</b><span style="letter-spacing:0.248px">: Kotlin</span></div>
<div style="position:absolute;left:155.3px;top:1297.4px;width:9.4px;height:9.4px;border-radius:50%;background:#bebcb8"></div>
<div class="t" style="left:184.5px;top:1326.4px;font-size:26.50px;color:#bebcb8;"><b style="letter-spacing:0.362px">UI Framework</b><span style="letter-spacing:0.551px">: Jetpack Compose with Material 3</span></div>
<div style="position:absolute;left:155.3px;top:1336.5px;width:9.4px;height:9.4px;border-radius:50%;background:#bebcb8"></div>
<div class="t" style="left:184.5px;top:1365.7px;font-size:26.50px;color:#bebcb8;"><b style="letter-spacing:0.641px">Architecture</b><span style="letter-spacing:0.632px">: MVVM (Model-View-ViewModel) with Clean Architecture principles</span></div>
<div style="position:absolute;left:155.3px;top:1375.8px;width:9.4px;height:9.4px;border-radius:50%;background:#bebcb8"></div>
<div class="t" style="left:184.5px;top:1404.8px;font-size:26.50px;color:#bebcb8;"><b style="letter-spacing:0.445px">Dependency Injection</b><span style="letter-spacing:0.683px">: Hilt</span></div>
<div style="position:absolute;left:155.3px;top:1414.9px;width:9.4px;height:9.4px;border-radius:50%;background:#bebcb8"></div>
<div class="t" style="left:184.5px;top:1443.9px;font-size:26.50px;color:#bebcb8;"><b style="letter-spacing:0.080px">Asynchronous Tasks</b><span style="letter-spacing:0.366px">: Kotlin Coroutines &amp; Flow</span></div>
<div style="position:absolute;left:155.3px;top:1454.0px;width:9.4px;height:9.4px;border-radius:50%;background:#bebcb8"></div>
<div class="t" style="left:184.5px;top:1482.6px;font-size:26.50px;color:#bebcb8;"><b style="letter-spacing:0.394px">Navigation</b><span style="letter-spacing:0.389px">: Compose Navigation</span></div>
<div style="position:absolute;left:155.3px;top:1492.7px;width:9.4px;height:9.4px;border-radius:50%;background:#bebcb8"></div>
<div class="t" style="left:184.5px;top:1521.7px;font-size:26.50px;color:#bebcb8;"><b style="letter-spacing:0.185px">Image Loading</b><span style="letter-spacing:0.271px">: Coil</span></div>
<div style="position:absolute;left:155.3px;top:1531.8px;width:9.4px;height:9.4px;border-radius:50%;background:#bebcb8"></div>
<div class="t" style="left:184.5px;top:1560.5px;font-size:26.50px;color:#bebcb8;"><b style="letter-spacing:0.287px">Code Generation</b><span style="letter-spacing:0.261px">: KSP (Kotlin Symbol Processing)</span></div>
<div style="position:absolute;left:155.3px;top:1570.6px;width:9.4px;height:9.4px;border-radius:50%;background:#bebcb8"></div>
<div class="t" style="left:132.5px;top:1701.6px;font-size:46.50px;letter-spacing:1.691px;color:#bebcb8;"><b>Implementation Steps</b></div>
<div class="t" style="left:132.5px;top:1785.2px;font-size:26.50px;color:#bebcb8;"><b style="letter-spacing:0.269px">Total Duration:</b><span style="letter-spacing:0.819px"> 7m 39s</span></div>
<!-- preview -->
<div class="t" style="left:1626.5px;top:773.7px;font-size:24.50px;letter-spacing:-0.831px;color:#dfe1e5;">HikeFeedScreenPreview</div>
<svg style="position:absolute;left:2172.0px;top:769.5px" width="32" height="32" viewBox="-16.0 -16.0 32 32" fill="none" stroke="#ced0d6" stroke-width="2.60" stroke-linecap="round" stroke-linejoin="round" ><circle cx="0" cy="-9" r="2.3" fill="#ced0d6" stroke="none"/><circle cx="0" cy="0" r="2.3" fill="#ced0d6" stroke="none"/><circle cx="0" cy="9" r="2.3" fill="#ced0d6" stroke="none"/></svg>
<div style="position:absolute;left:1624.5px;top:814.5px;width:591.0px;height:615.0px;background:#000"></div>
<div style="position:absolute;left:1626.5px;top:816.5px;width:587.0px;height:611.0px;background:#fff"></div>
<div style="position:absolute;left:1647px;top:838px;width:546px;height:568px;border-radius:34px;background:#e2e2ec;box-shadow:0 1px 4px rgba(120,120,160,.35);overflow:hidden"><div style="position:absolute;left:-1647px;top:-838px">
<svg style="position:absolute;left:1650.0px;top:840.0px" width="540.0" height="329.5" viewBox="1650.0 840.0 540.0 329.5"><defs>
<linearGradient id="csky" x1="0" y1="840" x2="0" y2="925" gradientUnits="userSpaceOnUse"><stop offset="0" stop-color="#dadae3"/><stop offset=".45" stop-color="#cfcfd2"/><stop offset=".8" stop-color="#c3c1bd"/><stop offset="1" stop-color="#b6b1aa"/></linearGradient>
<linearGradient id="cskyr" x1="1650" y1="0" x2="2190" y2="0" gradientUnits="userSpaceOnUse"><stop offset="0" stop-color="#e2e2ee" stop-opacity=".55"/><stop offset=".5" stop-color="#c8c8c8" stop-opacity="0"/><stop offset="1" stop-color="#a9a8a2" stop-opacity=".55"/></linearGradient>
<linearGradient id="cwat" x1="1650" y1="0" x2="2190" y2="0" gradientUnits="userSpaceOnUse"><stop offset="0" stop-color="#8d909b"/><stop offset=".55" stop-color="#76829b"/><stop offset="1" stop-color="#5f759f"/></linearGradient>
<linearGradient id="csun" x1="1650" y1="1169" x2="1950" y2="965" gradientUnits="userSpaceOnUse"><stop offset="0" stop-color="#79601e"/><stop offset=".35" stop-color="#7b621e"/><stop offset=".7" stop-color="#725f22"/><stop offset="1" stop-color="#5f5624"/></linearGradient>
<linearGradient id="cshd" x1="1900" y1="965" x2="2100" y2="1169" gradientUnits="userSpaceOnUse"><stop offset="0" stop-color="#34362a"/><stop offset=".5" stop-color="#23251b"/><stop offset="1" stop-color="#14160f"/></linearGradient>
<filter id="cn" filterUnits="userSpaceOnUse" x="1650" y="940" width="540" height="230"><feTurbulence type="fractalNoise" baseFrequency=".5" numOctaves="2" seed="5"/><feColorMatrix values="0 0 0 0 0  0 0 0 0 0  0 0 0 0 0  0 0 0 -1.6 1.05"/><feComposite in2="SourceGraphic" operator="in"/></filter>
</defs><rect x="1650" y="840" width="540" height="120" fill="url(#csky)"/><rect x="1650" y="840" width="540" height="95" fill="url(#cskyr)"/><path d="M1900.0 926.0 L1960.0 924.0 L2030.0 925.0 L2060.0 926.0 L2060.0 945.0 L1900.0 945.0 Z" fill="#8e8b93"/><path d="M1650.0 920.0 L1700.0 919.0 L1760.0 920.0 L1804.0 919.6 L1830.0 921.0 L1862.0 923.0 L1890.0 926.0 L1920.0 930.5 L1960.0 936.0 L2000.0 942.0 L2000.0 950.0 L1650.0 950.0 Z" fill="#716b72"/><path d="M2190.0 921.5 L2160.0 921.0 L2124.0 920.0 L2090.0 922.0 L2051.0 927.5 L2015.0 933.0 L1979.0 938.0 L1950.0 942.0 L1950.0 950.0 L2190.0 950.0 Z" fill="#6b6870"/><rect x="1650" y="940" width="540" height="28" fill="url(#cwat)"/><path d="M1650.0 940.0 L1730.0 941.0 L1830.0 943.0 L1930.0 946.0 L2000.0 949.0 L2040.0 951.0 L1930.0 952.0 L1800.0 953.0 L1700.0 955.0 L1650.0 958.0 Z" fill="#5f5d65"/><path d="M1950.0 942.0 L2050.0 944.0 L2190.0 945.0 L2190.0 940.0 L1950.0 940.0 Z" fill="#66656d"/><rect x="1650" y="963" width="540" height="20" fill="#7b7c80"/><rect x="1770" y="962" width="160" height="8" fill="#9b9ca0" opacity=".7"/><rect x="2030" y="964" width="140" height="7" fill="#9a958a" opacity=".7"/><path d="M1650.0 968.0 L1760.0 972.0 L1900.0 976.0 L2000.0 972.0 L2190.0 976.0 L2190.0 1169.0 L1650.0 1169.0 Z" fill="#353a32"/><path d="M2000.0 974.0 L2190.0 978.0 L2190.0 1020.0 L2100.0 1010.0 L2040.0 990.0 Z" fill="#414741" opacity=".8"/><rect x="1742.4" y="975.8" width="5.2" height="1.8" fill="#a9aab0" opacity="0.90"/><rect x="1906.6" y="981.3" width="2.9" height="1.8" fill="#b9bac0" opacity="0.46"/><rect x="2149.4" y="970.6" width="2.7" height="2.2" fill="#a9aab0" opacity="0.76"/><rect x="1886.5" y="981.9" width="5.9" height="1.7" fill="#8f9096" opacity="0.47"/><rect x="1829.3" y="972.0" width="2.6" height="2.5" fill="#d0c7b0" opacity="0.46"/><rect x="2047.7" y="963.8" width="6.0" height="1.0" fill="#a9aab0" opacity="0.70"/><rect x="1836.7" y="971.7" width="2.9" height="1.1" fill="#a9aab0" opacity="0.48"/><rect x="1759.6" y="975.5" width="6.0" height="2.1" fill="#5a5b60" opacity="0.89"/><rect x="1692.6" y="973.2" width="4.8" height="1.6" fill="#d0c7b0" opacity="0.87"/><rect x="2125.4" y="970.2" width="3.8" height="1.7" fill="#8f9096" opacity="0.59"/><rect x="1911.8" y="967.3" width="6.2" height="1.3" fill="#8f9096" opacity="0.45"/><rect x="1692.2" y="974.0" width="4.6" height="1.9" fill="#d0c7b0" opacity="0.70"/><rect x="1985.0" y="965.6" width="2.9" height="1.6" fill="#d0c7b0" opacity="0.61"/><rect x="1971.5" y="968.1" width="2.5" height="1.1" fill="#a9aab0" opacity="0.80"/><rect x="1853.7" y="975.7" width="5.4" height="2.4" fill="#a9aab0" opacity="0.63"/><rect x="2179.2" y="981.2" width="5.0" height="2.4" fill="#8f9096" opacity="0.68"/><rect x="2008.5" y="980.7" width="3.2" height="1.9" fill="#8f9096" opacity="0.81"/><rect x="2065.2" y="971.7" width="6.2" height="1.1" fill="#d0c7b0" opacity="0.75"/><rect x="1673.4" y="967.0" width="4.0" height="2.4" fill="#a9aab0" opacity="0.89"/><rect x="2050.3" y="971.6" width="3.3" height="2.5" fill="#5a5b60" opacity="0.86"/><rect x="1908.9" y="981.1" width="6.5" height="1.6" fill="#a9aab0" opacity="0.85"/><rect x="1973.7" y="970.5" width="4.9" height="2.4" fill="#d0c7b0" opacity="0.51"/><rect x="1966.9" y="964.8" width="5.6" height="1.6" fill="#a9aab0" opacity="0.88"/><rect x="1667.5" y="973.9" width="5.2" height="2.4" fill="#5a5b60" opacity="0.64"/><rect x="2017.1" y="977.0" width="6.1" height="1.2" fill="#a9aab0" opacity="0.49"/><rect x="1704.8" y="962.5" width="4.2" height="1.2" fill="#b9bac0" opacity="0.74"/><rect x="1722.1" y="972.8" width="3.6" height="1.8" fill="#a9aab0" opacity="0.73"/><rect x="1751.2" y="979.1" width="3.0" height="2.2" fill="#b9bac0" opacity="0.72"/><rect x="1922.6" y="976.9" width="2.3" height="2.5" fill="#8f9096" opacity="0.66"/><rect x="1688.7" y="977.3" width="2.9" height="2.1" fill="#d0c7b0" opacity="0.88"/><rect x="1975.7" y="976.9" width="3.2" height="1.2" fill="#d0c7b0" opacity="0.82"/><rect x="2080.6" y="971.8" width="4.9" height="1.9" fill="#b9bac0" opacity="0.68"/><rect x="2044.3" y="981.3" width="3.6" height="2.1" fill="#5a5b60" opacity="0.79"/><rect x="1755.5" y="974.3" width="3.6" height="1.3" fill="#b9bac0" opacity="0.59"/><rect x="2181.4" y="964.2" width="2.4" height="1.1" fill="#8f9096" opacity="0.68"/><rect x="2156.9" y="975.6" width="5.5" height="1.8" fill="#5a5b60" opacity="0.63"/><rect x="1867.8" y="966.5" width="2.2" height="1.7" fill="#a9aab0" opacity="0.57"/><rect x="1967.4" y="970.1" width="4.1" height="2.3" fill="#8f9096" opacity="0.62"/><rect x="1913.0" y="974.6" width="6.8" height="1.1" fill="#8f9096" opacity="0.53"/><rect x="1852.7" y="974.1" width="3.1" height="1.7" fill="#5a5b60" opacity="0.75"/><rect x="2110.2" y="976.0" width="5.4" height="1.4" fill="#8f9096" opacity="0.62"/><rect x="1980.8" y="978.5" width="6.8" height="2.6" fill="#b9bac0" opacity="0.52"/><rect x="1762.1" y="979.5" width="5.6" height="1.1" fill="#a9aab0" opacity="0.49"/><rect x="1815.4" y="980.9" width="5.7" height="1.7" fill="#b9bac0" opacity="0.90"/><rect x="1743.2" y="970.7" width="5.4" height="1.6" fill="#5a5b60" opacity="0.76"/><rect x="1793.3" y="981.0" width="3.6" height="1.4" fill="#a9aab0" opacity="0.85"/><rect x="1923.7" y="966.8" width="5.4" height="2.1" fill="#a9aab0" opacity="0.87"/><rect x="1902.5" y="970.7" width="5.1" height="1.4" fill="#a9aab0" opacity="0.75"/><rect x="1984.5" y="964.0" width="6.9" height="1.3" fill="#d0c7b0" opacity="0.81"/><rect x="2150.4" y="976.1" width="2.1" height="1.8" fill="#b9bac0" opacity="0.63"/><rect x="1888.9" y="971.0" width="7.0" height="2.5" fill="#a9aab0" opacity="0.49"/><rect x="1818.8" y="971.1" width="6.5" height="1.6" fill="#a9aab0" opacity="0.71"/><rect x="2138.4" y="970.6" width="6.2" height="1.5" fill="#8f9096" opacity="0.63"/><rect x="1947.5" y="966.5" width="6.0" height="2.3" fill="#8f9096" opacity="0.85"/><rect x="1664.3" y="973.6" width="2.4" height="2.4" fill="#a9aab0" opacity="0.52"/><rect x="1918.6" y="972.5" width="4.7" height="1.8" fill="#d0c7b0" opacity="0.52"/><rect x="1736.3" y="967.8" width="5.2" height="1.0" fill="#b9bac0" opacity="0.75"/><rect x="1753.8" y="964.0" width="6.1" height="1.6" fill="#d0c7b0" opacity="0.48"/><rect x="1674.7" y="971.9" width="5.4" height="2.0" fill="#a9aab0" opacity="0.46"/><rect x="1778.3" y="969.2" width="3.3" height="1.3" fill="#a9aab0" opacity="0.78"/><rect x="1933.0" y="963.6" width="6.1" height="1.3" fill="#b9bac0" opacity="0.78"/><rect x="1976.5" y="974.7" width="5.2" height="1.0" fill="#d0c7b0" opacity="0.67"/><rect x="1740.9" y="979.0" width="6.0" height="2.5" fill="#b9bac0" opacity="0.55"/><rect x="2067.2" y="980.1" width="4.7" height="2.5" fill="#d0c7b0" opacity="0.63"/><rect x="2154.2" y="980.7" width="6.0" height="1.0" fill="#d0c7b0" opacity="0.53"/><rect x="1795.5" y="962.5" width="3.9" height="2.2" fill="#a9aab0" opacity="0.87"/><rect x="1939.2" y="979.6" width="3.0" height="2.6" fill="#5a5b60" opacity="0.58"/><rect x="1893.5" y="977.3" width="6.8" height="2.5" fill="#a9aab0" opacity="0.63"/><rect x="1749.5" y="972.8" width="6.1" height="1.6" fill="#a9aab0" opacity="0.90"/><rect x="2138.2" y="981.1" width="5.8" height="2.6" fill="#a9aab0" opacity="0.78"/><rect x="1767.7" y="972.7" width="3.9" height="2.6" fill="#d0c7b0" opacity="0.51"/><rect x="1782.2" y="970.5" width="5.2" height="2.2" fill="#a9aab0" opacity="0.74"/><rect x="1789.1" y="970.6" width="3.9" height="1.8" fill="#d0c7b0" opacity="0.47"/><rect x="2110.1" y="966.1" width="5.9" height="1.5" fill="#8f9096" opacity="0.81"/><rect x="2045.4" y="976.6" width="7.0" height="1.6" fill="#8f9096" opacity="0.46"/><rect x="2067.1" y="979.3" width="3.5" height="2.3" fill="#8f9096" opacity="0.54"/><rect x="1775.5" y="976.7" width="6.1" height="1.8" fill="#b9bac0" opacity="0.46"/><rect x="2140.7" y="964.6" width="3.7" height="1.6" fill="#5a5b60" opacity="0.73"/><rect x="1972.2" y="975.9" width="6.3" height="2.2" fill="#d0c7b0" opacity="0.75"/><rect x="2044.2" y="971.2" width="2.6" height="2.4" fill="#5a5b60" opacity="0.83"/><rect x="2127.0" y="963.5" width="3.5" height="2.0" fill="#a9aab0" opacity="0.79"/><rect x="2150.7" y="964.1" width="5.1" height="2.0" fill="#5a5b60" opacity="0.54"/><rect x="1918.7" y="976.3" width="3.1" height="2.1" fill="#d0c7b0" opacity="0.86"/><rect x="1932.0" y="962.2" width="6.2" height="1.5" fill="#d0c7b0" opacity="0.76"/><rect x="1874.2" y="964.5" width="6.4" height="2.0" fill="#b9bac0" opacity="0.90"/><rect x="1778.2" y="976.1" width="4.4" height="1.9" fill="#5a5b60" opacity="0.62"/><rect x="1992.2" y="974.7" width="3.8" height="1.6" fill="#8f9096" opacity="0.74"/><rect x="1897.2" y="972.3" width="3.1" height="2.3" fill="#b9bac0" opacity="0.83"/><rect x="2130.8" y="978.9" width="5.9" height="2.4" fill="#b9bac0" opacity="0.61"/><rect x="1736.8" y="962.3" width="3.4" height="2.1" fill="#d0c7b0" opacity="0.55"/><rect x="2176.9" y="988.4" width="3.2" height="2.5" fill="#2f342f" opacity="0.77"/><rect x="2134.2" y="1032.7" width="10.1" height="1.1" fill="#6b6d66" opacity="0.88"/><rect x="2052.3" y="1016.1" width="11.4" height="2.0" fill="#3a3f3a" opacity="0.77"/><rect x="1999.4" y="1032.9" width="8.3" height="1.5" fill="#2f342f" opacity="0.53"/><rect x="2011.8" y="1011.9" width="9.6" height="2.5" fill="#565b57" opacity="0.76"/><rect x="2109.4" y="995.5" width="11.6" height="1.5" fill="#2f342f" opacity="0.58"/><rect x="2042.8" y="1021.5" width="6.9" height="1.5" fill="#565b57" opacity="0.64"/><rect x="2039.1" y="997.1" width="10.9" height="1.6" fill="#2f342f" opacity="0.59"/><rect x="2062.9" y="1015.0" width="5.7" height="1.9" fill="#3a3f3a" opacity="0.79"/><rect x="2165.3" y="1005.6" width="3.8" height="1.7" fill="#565b57" opacity="0.64"/><rect x="2068.5" y="1035.8" width="11.6" height="1.8" fill="#3a3f3a" opacity="0.45"/><rect x="2079.5" y="991.6" width="3.3" height="1.6" fill="#2f342f" opacity="0.60"/><rect x="2059.7" y="991.5" width="3.3" height="1.8" fill="#2f342f" opacity="0.75"/><rect x="2009.7" y="991.7" width="4.1" height="1.2" fill="#3a3f3a" opacity="0.47"/><rect x="2013.4" y="1022.5" width="4.2" height="1.4" fill="#3a3f3a" opacity="0.66"/><rect x="2002.8" y="1022.8" width="11.6" height="1.2" fill="#6b6d66" opacity="0.87"/><rect x="1993.5" y="1010.0" width="8.7" height="1.5" fill="#2f342f" opacity="0.73"/><rect x="2106.4" y="1022.0" width="4.6" height="1.1" fill="#2f342f" opacity="0.61"/><rect x="2013.0" y="993.0" width="5.3" height="2.3" fill="#2f342f" opacity="0.46"/><rect x="2136.7" y="1014.9" width="8.6" height="1.6" fill="#565b57" opacity="0.78"/><rect x="2170.4" y="1030.0" width="3.3" height="1.6" fill="#565b57" opacity="0.54"/><rect x="2137.0" y="1018.1" width="3.4" height="2.0" fill="#3a3f3a" opacity="0.66"/><rect x="2038.6" y="993.8" width="5.4" height="1.1" fill="#2f342f" opacity="0.53"/><rect x="2177.5" y="999.1" width="3.3" height="1.2" fill="#6b6d66" opacity="0.47"/><rect x="2084.9" y="981.8" width="9.9" height="1.0" fill="#3a3f3a" opacity="0.83"/><rect x="2035.5" y="1012.1" width="4.3" height="1.5" fill="#565b57" opacity="0.77"/><rect x="2108.6" y="986.4" width="10.6" height="2.4" fill="#6b6d66" opacity="0.58"/><rect x="2154.7" y="995.8" width="5.3" height="1.8" fill="#6b6d66" opacity="0.83"/><rect x="2089.4" y="1021.8" width="10.4" height="2.5" fill="#2f342f" opacity="0.67"/><rect x="2056.9" y="1032.5" width="3.7" height="2.0" fill="#2f342f" opacity="0.77"/><rect x="2006.7" y="1035.3" width="6.0" height="1.1" fill="#2f342f" opacity="0.54"/><rect x="2060.6" y="1037.2" width="3.0" height="1.5" fill="#565b57" opacity="0.50"/><rect x="2088.8" y="983.1" width="8.7" height="1.1" fill="#565b57" opacity="0.86"/><rect x="2040.2" y="998.2" width="5.8" height="2.4" fill="#6b6d66" opacity="0.59"/><rect x="2121.8" y="1027.6" width="3.5" height="1.4" fill="#6b6d66" opacity="0.76"/><rect x="1990.7" y="994.5" width="4.1" height="1.5" fill="#565b57" opacity="0.87"/><rect x="2012.0" y="1034.4" width="10.4" height="2.4" fill="#2f342f" opacity="0.66"/><rect x="2070.9" y="1001.2" width="10.3" height="1.5" fill="#2f342f" opacity="0.85"/><rect x="2177.0" y="1002.5" width="3.4" height="2.4" fill="#2f342f" opacity="0.49"/><rect x="2150.4" y="1025.1" width="8.0" height="1.7" fill="#6b6d66" opacity="0.90"/><rect x="2149.9" y="986.8" width="7.3" height="2.2" fill="#3a3f3a" opacity="0.48"/><rect x="2056.2" y="1002.8" width="11.2" height="1.9" fill="#3a3f3a" opacity="0.65"/><rect x="2095.0" y="1003.7" width="7.1" height="2.3" fill="#3a3f3a" opacity="0.61"/><rect x="2045.8" y="980.6" width="3.7" height="1.2" fill="#3a3f3a" opacity="0.79"/><rect x="2005.5" y="1013.8" width="10.1" height="1.4" fill="#2f342f" opacity="0.46"/><rect x="2169.5" y="1015.1" width="5.7" height="1.4" fill="#2f342f" opacity="0.87"/><rect x="2055.8" y="1003.9" width="8.0" height="1.3" fill="#3a3f3a" opacity="0.75"/><rect x="2078.0" y="1027.9" width="6.8" height="2.2" fill="#2f342f" opacity="0.80"/><rect x="2034.0" y="1011.8" width="9.1" height="1.9" fill="#2f342f" opacity="0.72"/><rect x="2037.1" y="1007.6" width="10.3" height="2.5" fill="#565b57" opacity="0.71"/><rect x="2034.4" y="1004.9" width="4.2" height="2.1" fill="#565b57" opacity="0.70"/><rect x="2088.3" y="1019.1" width="4.0" height="2.2" fill="#2f342f" opacity="0.63"/><rect x="2009.9" y="1010.3" width="9.7" height="1.0" fill="#2f342f" opacity="0.65"/><rect x="2147.7" y="989.5" width="11.5" height="1.8" fill="#2f342f" opacity="0.77"/><rect x="2041.0" y="987.3" width="4.5" height="2.1" fill="#6b6d66" opacity="0.76"/><rect x="2094.9" y="999.5" width="10.1" height="1.5" fill="#2f342f" opacity="0.78"/><rect x="2114.3" y="1016.9" width="6.3" height="1.0" fill="#3a3f3a" opacity="0.73"/><rect x="2055.4" y="1005.8" width="9.6" height="1.3" fill="#3a3f3a" opacity="0.57"/><rect x="2101.0" y="1016.8" width="5.5" height="2.1" fill="#6b6d66" opacity="0.87"/><rect x="2089.7" y="1034.3" width="9.2" height="1.8" fill="#2f342f" opacity="0.65"/><rect x="2148.8" y="980.8" width="8.9" height="1.6" fill="#6b6d66" opacity="0.73"/><rect x="2156.7" y="1003.3" width="5.6" height="1.9" fill="#2f342f" opacity="0.87"/><rect x="2184.9" y="986.6" width="7.2" height="1.3" fill="#3a3f3a" opacity="0.82"/><rect x="2078.7" y="989.9" width="3.2" height="1.2" fill="#6b6d66" opacity="0.64"/><rect x="2116.0" y="1009.2" width="5.5" height="1.9" fill="#6b6d66" opacity="0.78"/><rect x="2061.6" y="984.9" width="7.2" height="1.3" fill="#2f342f" opacity="0.64"/><rect x="2019.6" y="1028.6" width="10.0" height="2.1" fill="#6b6d66" opacity="0.78"/><rect x="1992.1" y="1034.0" width="10.3" height="1.8" fill="#3a3f3a" opacity="0.54"/><rect x="2031.3" y="1024.1" width="3.4" height="1.0" fill="#3a3f3a" opacity="0.50"/><rect x="2058.2" y="986.7" width="5.1" height="1.5" fill="#3a3f3a" opacity="0.53"/><rect x="1881.6" y="1046.3" width="14.7" height="1.7" fill="#262b25" opacity="0.59"/><rect x="1747.9" y="1003.8" width="12.7" height="2.0" fill="#2a2f29" opacity="0.55"/><rect x="1766.5" y="979.8" width="5.0" height="2.9" fill="#454a42" opacity="0.46"/><rect x="1808.8" y="1009.1" width="13.2" height="1.9" fill="#2a2f29" opacity="0.72"/><rect x="1816.2" y="1022.7" width="15.6" height="2.2" fill="#454a42" opacity="0.89"/><rect x="1723.9" y="1048.2" width="10.9" height="3.1" fill="#2a2f29" opacity="0.77"/><rect x="1799.7" y="1010.2" width="11.7" height="1.9" fill="#2a2f29" opacity="0.69"/><rect x="1820.0" y="1015.4" width="11.0" height="1.7" fill="#454a42" opacity="0.47"/><rect x="1722.5" y="1019.2" width="13.8" height="2.2" fill="#454a42" opacity="0.86"/><rect x="1787.8" y="1042.4" width="9.5" height="1.9" fill="#2a2f29" opacity="0.50"/><rect x="1847.0" y="1028.9" width="13.9" height="2.0" fill="#262b25" opacity="0.51"/><rect x="1837.6" y="985.2" width="8.6" height="2.4" fill="#2a2f29" opacity="0.48"/><rect x="1757.0" y="979.7" width="13.7" height="2.9" fill="#2a2f29" opacity="0.81"/><rect x="1887.5" y="1016.8" width="15.9" height="3.0" fill="#454a42" opacity="0.46"/><rect x="1848.1" y="1013.3" width="4.4" height="2.0" fill="#262b25" opacity="0.54"/><rect x="1883.7" y="1046.4" width="6.6" height="1.7" fill="#262b25" opacity="0.74"/><rect x="1824.2" y="1018.2" width="6.9" height="1.7" fill="#2a2f29" opacity="0.86"/><rect x="1763.9" y="1002.7" width="14.7" height="3.1" fill="#262b25" opacity="0.76"/><rect x="1756.1" y="1027.9" width="14.0" height="2.8" fill="#2a2f29" opacity="0.70"/><rect x="1759.2" y="999.5" width="14.3" height="2.7" fill="#2a2f29" opacity="0.82"/><rect x="1681.6" y="1023.4" width="8.0" height="2.6" fill="#454a42" opacity="0.56"/><rect x="1888.1" y="983.7" width="10.7" height="2.6" fill="#2a2f29" opacity="0.85"/><rect x="1889.6" y="1035.6" width="15.9" height="2.0" fill="#454a42" opacity="0.62"/><rect x="1847.5" y="988.2" width="14.4" height="1.9" fill="#262b25" opacity="0.46"/><rect x="1815.4" y="1031.7" width="15.5" height="2.3" fill="#454a42" opacity="0.67"/><rect x="1823.8" y="1016.8" width="10.7" height="2.6" fill="#454a42" opacity="0.57"/><rect x="1898.5" y="994.3" width="4.7" height="3.3" fill="#454a42" opacity="0.80"/><rect x="1820.0" y="1021.6" width="7.5" height="2.1" fill="#454a42" opacity="0.81"/><rect x="1722.1" y="1045.0" width="5.9" height="1.6" fill="#262b25" opacity="0.66"/><rect x="1790.7" y="996.4" width="7.3" height="1.7" fill="#2a2f29" opacity="0.85"/><rect x="1897.1" y="988.5" width="8.5" height="2.7" fill="#2a2f29" opacity="0.57"/><rect x="1843.6" y="978.5" width="4.4" height="3.1" fill="#2a2f29" opacity="0.56"/><rect x="1895.7" y="1023.7" width="4.5" height="3.1" fill="#454a42" opacity="0.54"/><rect x="1793.5" y="1022.8" width="13.4" height="1.9" fill="#262b25" opacity="0.63"/><rect x="1821.5" y="999.1" width="4.9" height="3.3" fill="#262b25" opacity="0.72"/><rect x="1665.0" y="986.7" width="12.9" height="3.5" fill="#2a2f29" opacity="0.72"/><rect x="1689.1" y="1030.7" width="9.6" height="2.9" fill="#262b25" opacity="0.81"/><rect x="1666.6" y="981.1" width="13.1" height="1.7" fill="#2a2f29" opacity="0.51"/><rect x="1677.7" y="1039.7" width="6.5" height="2.4" fill="#454a42" opacity="0.79"/><rect x="1709.5" y="1020.3" width="15.3" height="2.8" fill="#262b25" opacity="0.74"/><rect x="1837.5" y="1044.6" width="7.7" height="3.3" fill="#262b25" opacity="0.51"/><rect x="1748.1" y="1033.7" width="14.0" height="1.6" fill="#454a42" opacity="0.61"/><rect x="1706.5" y="1024.9" width="5.9" height="2.1" fill="#454a42" opacity="0.48"/><rect x="1732.3" y="1008.8" width="13.9" height="2.7" fill="#454a42" opacity="0.61"/><rect x="1889.0" y="980.5" width="7.6" height="3.1" fill="#454a42" opacity="0.82"/><rect x="1796.0" y="1047.7" width="10.4" height="2.7" fill="#454a42" opacity="0.82"/><rect x="1699.5" y="1009.7" width="6.3" height="3.0" fill="#2a2f29" opacity="0.66"/><rect x="1655.8" y="1023.9" width="7.1" height="3.0" fill="#454a42" opacity="0.63"/><rect x="1893.8" y="1031.3" width="12.5" height="2.8" fill="#454a42" opacity="0.77"/><rect x="1690.2" y="1048.8" width="13.0" height="3.1" fill="#454a42" opacity="0.69"/><rect x="1684.7" y="982.9" width="9.7" height="1.8" fill="#262b25" opacity="0.81"/><rect x="1683.8" y="979.3" width="10.2" height="1.9" fill="#262b25" opacity="0.54"/><rect x="1740.1" y="1048.4" width="7.2" height="2.1" fill="#454a42" opacity="0.86"/><rect x="1884.7" y="1017.0" width="8.1" height="3.0" fill="#2a2f29" opacity="0.81"/><rect x="1794.6" y="1042.9" width="5.8" height="2.9" fill="#2a2f29" opacity="0.75"/><rect x="1682.5" y="1044.3" width="15.6" height="1.7" fill="#262b25" opacity="0.49"/><rect x="1674.9" y="1035.3" width="12.6" height="3.4" fill="#262b25" opacity="0.47"/><rect x="1719.8" y="1017.2" width="9.1" height="2.8" fill="#2a2f29" opacity="0.84"/><rect x="1703.4" y="1030.9" width="12.8" height="1.6" fill="#2a2f29" opacity="0.53"/><rect x="1708.2" y="982.4" width="12.0" height="1.8" fill="#2a2f29" opacity="0.72"/><path d="M1650.0 1022.0 L1668.0 1014.0 L1690.0 1020.0 L1716.0 1040.0 L1750.0 1052.0 L1650.0 1100.0 Z" fill="#2b2d27"/><path d="M2090.0 1030.0 L2140.0 1022.0 L2190.0 1028.0 L2190.0 1120.0 L2120.0 1075.0 Z" fill="#20221a"/><path d="M2101.0 1022.0 L2120.0 1016.0 L2139.0 1011.5 L2160.0 1017.0 L2190.0 1022.0 L2190.0 1031.0 L2150.0 1033.0 L2120.0 1027.0 Z" fill="#8a6f25"/><clipPath id="chc"><path d="M1630.0 1096.0 C1633.3 1094.5 1640.0 1091.3 1649.7 1087.0 C1659.5 1082.7 1674.0 1076.3 1688.5 1070.3 C1703.0 1064.3 1720.8 1057.4 1737.0 1050.9 C1753.2 1044.4 1769.4 1038.4 1785.6 1031.5 C1801.8 1024.6 1817.8 1017.3 1834.0 1009.6 C1850.2 1001.9 1869.2 991.8 1882.7 985.3 C1896.2 978.8 1905.5 974.1 1915.0 970.5 C1924.5 966.9 1931.2 965.0 1940.0 963.8 C1948.8 962.6 1959.7 962.7 1968.0 963.5 C1976.3 964.3 1984.0 966.5 1990.0 968.5 C1996.0 970.5 1993.6 969.6 2004.0 975.6 C2014.4 981.6 2036.4 995.5 2052.6 1004.8 C2068.8 1014.1 2084.8 1022.6 2101.0 1031.5 C2117.2 1040.4 2134.9 1049.9 2149.7 1058.0 C2164.5 1066.1 2179.9 1074.5 2190.0 1080.0 C2200.1 1085.5 2206.7 1089.2 2210.0 1091.0 L2210 1180 L1630 1180 Z"/></clipPath><path d="M1630.0 1096.0 C1633.3 1094.5 1640.0 1091.3 1649.7 1087.0 C1659.5 1082.7 1674.0 1076.3 1688.5 1070.3 C1703.0 1064.3 1720.8 1057.4 1737.0 1050.9 C1753.2 1044.4 1769.4 1038.4 1785.6 1031.5 C1801.8 1024.6 1817.8 1017.3 1834.0 1009.6 C1850.2 1001.9 1869.2 991.8 1882.7 985.3 C1896.2 978.8 1905.5 974.1 1915.0 970.5 C1924.5 966.9 1931.2 965.0 1940.0 963.8 C1948.8 962.6 1959.7 962.7 1968.0 963.5 C1976.3 964.3 1984.0 966.5 1990.0 968.5 C1996.0 970.5 1993.6 969.6 2004.0 975.6 C2014.4 981.6 2036.4 995.5 2052.6 1004.8 C2068.8 1014.1 2084.8 1022.6 2101.0 1031.5 C2117.2 1040.4 2134.9 1049.9 2149.7 1058.0 C2164.5 1066.1 2179.9 1074.5 2190.0 1080.0 C2200.1 1085.5 2206.7 1089.2 2210.0 1091.0 L2210 1180 L1630 1180 Z" fill="url(#cshd)"/><g clip-path="url(#chc)"><path d="M1965.0 955.0 C1963.8 956.8 1962.5 961.8 1958.0 966.0 C1953.5 970.2 1944.7 975.0 1938.0 980.0 C1931.3 985.0 1923.5 990.7 1918.0 996.0 C1912.5 1001.3 1909.2 1006.8 1905.0 1012.0 C1900.8 1017.2 1899.2 1023.2 1893.0 1027.0 C1886.8 1030.8 1878.2 1032.8 1868.0 1035.0 C1857.8 1037.2 1842.0 1037.2 1832.0 1040.0 C1822.0 1042.8 1813.5 1047.0 1808.0 1052.0 C1802.5 1057.0 1799.3 1062.8 1799.0 1070.0 C1798.7 1077.2 1801.2 1086.7 1806.0 1095.0 C1810.8 1103.3 1817.7 1112.2 1828.0 1120.0 C1838.3 1127.8 1851.0 1135.7 1868.0 1142.0 C1885.0 1148.3 1906.3 1154.2 1930.0 1158.0 C1953.7 1161.8 1983.3 1162.7 2010.0 1165.0 C2036.7 1167.3 2076.7 1170.8 2090.0 1172.0 L2090 1180 L1630 1180 L1630 950 Z" fill="url(#csun)"/></g><path d="M1948.0 968.0 C1943.3 970.8 1927.2 978.8 1920.0 985.0 C1912.8 991.2 1909.7 998.5 1905.0 1005.0 C1900.3 1011.5 1899.5 1019.5 1892.0 1024.0 C1884.5 1028.5 1871.2 1029.3 1860.0 1032.0 C1848.8 1034.7 1835.8 1036.0 1825.0 1040.0 C1814.2 1044.0 1801.2 1049.3 1795.0 1056.0 C1788.8 1062.7 1787.2 1071.0 1788.0 1080.0 C1788.8 1089.0 1793.0 1100.8 1800.0 1110.0 C1807.0 1119.2 1820.0 1128.3 1830.0 1135.0 C1840.0 1141.7 1855.0 1147.5 1860.0 1150.0" fill="none" stroke="#4b4526" stroke-width="5" opacity=".8"/><path d="M1760.0 1060.0 C1757.5 1063.3 1748.3 1073.3 1745.0 1080.0 C1741.7 1086.7 1739.5 1094.7 1740.0 1100.0 C1740.5 1105.3 1746.7 1110.0 1748.0 1112.0" fill="none" stroke="#4b4526" stroke-width="3.5" opacity=".8"/><path d="M1630.0 1096.0 C1633.3 1094.5 1640.0 1091.3 1649.7 1087.0 C1659.5 1082.7 1674.0 1076.3 1688.5 1070.3 C1703.0 1064.3 1720.8 1057.4 1737.0 1050.9 C1753.2 1044.4 1769.4 1038.4 1785.6 1031.5 C1801.8 1024.6 1817.8 1017.3 1834.0 1009.6 C1850.2 1001.9 1869.2 991.8 1882.7 985.3 C1896.2 978.8 1905.5 974.1 1915.0 970.5 C1924.5 966.9 1931.2 965.0 1940.0 963.8 C1948.8 962.6 1959.7 962.7 1968.0 963.5 C1976.3 964.3 1984.0 966.5 1990.0 968.5 C1996.0 970.5 1993.6 969.6 2004.0 975.6 C2014.4 981.6 2036.4 995.5 2052.6 1004.8 C2068.8 1014.1 2084.8 1022.6 2101.0 1031.5 C2117.2 1040.4 2134.9 1049.9 2149.7 1058.0 C2164.5 1066.1 2179.9 1074.5 2190.0 1080.0 C2200.1 1085.5 2206.7 1089.2 2210.0 1091.0 L2210 1180 L1630 1180 Z" filter="url(#cn)" opacity=".4"/><rect x="1953" y="908" width="3" height="57" fill="#6f5622"/><rect x="1949" y="916" width="11" height="5" fill="#3d3a30"/><rect x="1946" y="961" width="5" height="3" fill="#3a3a32"/><rect x="1958" y="961" width="5" height="3" fill="#3a3a32"/></svg>
<div style="position:absolute;left:2088.0px;top:864.3px;width:78.0px;height:42.2px;background:rgba(216,216,224,.92);border-radius:21px"></div>
<div class="t" style="left:2107.4px;top:875.3px;font-size:18.50px;letter-spacing:-0.850px;color:#44464e;-webkit-text-stroke:0"><b>Hard</b></div>
<div class="t" style="left:1680.0px;top:1205.7px;font-size:36.00px;letter-spacing:-1.100px;color:#5b5960;"><b>Mission Peak</b></div>
<div class="t" style="left:1680.7px;top:1265.8px;font-size:20.30px;letter-spacing:0.460px;color:#5f5e66;">A popular and challenging hike offering panoramic</div>
<div class="t" style="left:1680.7px;top:1295.5px;font-size:20.30px;letter-spacing:0.379px;color:#5f5e66;">views of the Bay Area. The summit is famous for ...</div>
<svg style="position:absolute;left:1681px;top:1352px" width="25" height="15" viewBox="0 0 25 15"><path d="M0.5 14.5 L8 3.5 L11.5 8.5 L16 1.5 L24.5 14.5 Z" fill="#4a5c86"/></svg>
<div class="t" style="left:1717.3px;top:1348.8px;font-size:20.30px;letter-spacing:0.434px;color:#55545c;">6.2 miles</div>
<svg style="position:absolute;left:1827.5px;top:1345.5px" width="28" height="28" viewBox="-14.0 -14.0 28 28" fill="none" stroke="#4a5c86" stroke-width="2.00" stroke-linecap="round" stroke-linejoin="round" ><circle cx="0" cy="0" r="10.3"/><path d="M0 -6 V0.5 L4.5 3.5"/></svg>
<div class="t" style="left:1864.6px;top:1348.8px;font-size:20.30px;letter-spacing:0.370px;color:#55545c;">2-4 hrs</div>
<svg style="position:absolute;left:1955.0px;top:1346.0px" width="28" height="28" viewBox="-14.0 -14.0 28 28" fill="none" stroke="#4a5c86" stroke-width="2.10" stroke-linecap="round" stroke-linejoin="round" ><circle cx="1" cy="-10" r="2.3" fill="#4a5c86" stroke="none"/><path d="M-3 -6 L1.5 -6.5 L3 0 L6.5 2 M1 -5 L-1 3 L-4 11.5 M-0.5 3 L2.5 6 L3 11.5 M7.5 -1 V11.5" /><path d="M-6.5 -5.5 L-3.5 -6 L-4.5 1 L-7.5 0.5 Z" fill="#4a5c86" stroke="none"/></svg>
<div class="t" style="left:1992.0px;top:1348.8px;font-size:20.30px;letter-spacing:0.713px;color:#55545c;">Loop</div>
</div></div>
<!-- phone -->
<div style="position:absolute;left:2493.0px;top:239.0px;width:787.0px;height:1665.5px;border-radius:136.0px;background:#38383a"></div>
<div style="position:absolute;left:2494.5px;top:240.5px;width:784.0px;height:1662.5px;border-radius:134.5px;background:#616164"></div>
<div style="position:absolute;left:2496.0px;top:242.0px;width:781.0px;height:1659.5px;border-radius:133.0px;background:#808083"></div>
<div style="position:absolute;left:2498.5px;top:244.5px;width:776.0px;height:1654.5px;border-radius:130.5px;background:#5c5c5f"></div>
<div style="position:absolute;left:2501.0px;top:247.0px;width:771.0px;height:1649.5px;border-radius:128.0px;background:#48484a"></div>
<div style="position:absolute;left:2504.0px;top:250.0px;width:765.0px;height:1643.5px;border-radius:125.0px;background:#343436"></div>
<div style="position:absolute;left:2505.5px;top:251.5px;width:762.0px;height:1640.5px;border-radius:123.5px;background:#1a1a1b"></div>
<div style="position:absolute;left:2507.0px;top:253.0px;width:759.0px;height:1637.5px;border-radius:122px;background:#000"></div>
<div style="position:absolute;left:2826.0px;top:239.0px;width:16.0px;height:13.0px;background:#4a4a4d"></div>
<div style="position:absolute;left:2929.0px;top:239.0px;width:16.0px;height:13.0px;background:#4a4a4d"></div>
<div style="position:absolute;left:2976.0px;top:1891.5px;width:16.0px;height:13.0px;background:#4a4a4d"></div>
<div style="position:absolute;left:2493.0px;top:486.0px;width:13.0px;height:16.0px;background:#3e3e41"></div>
<div style="position:absolute;left:3267.0px;top:486.0px;width:13.0px;height:16.0px;background:#3e3e41"></div>
<div style="position:absolute;left:2493.0px;top:1678.0px;width:13.0px;height:16.0px;background:#3e3e41"></div>
<div style="position:absolute;left:3267.0px;top:1678.0px;width:13.0px;height:16.0px;background:#3e3e41"></div>
<div style="position:absolute;left:3279.0px;top:695.0px;width:5.0px;height:130.0px;background:#3c3c3f;border-radius:0 3px 3px 0"></div>
<div style="position:absolute;left:3279.0px;top:900.0px;width:5.0px;height:235.0px;background:#3c3c3f;border-radius:0 3px 3px 0"></div>
<div style="position:absolute;left:2535.8px;top:285.0px;width:699.8px;height:1572.5px;border-radius:100px;overflow:hidden;background:#e6e6f2"><div style="position:absolute;left:-2535.8px;top:-285.0px">
<svg style="position:absolute;left:2535.8px;top:285.0px" width="699.8" height="820" viewBox="2535.8 285.0 699.8 820" preserveAspectRatio="none"><defs>
<linearGradient id="sky" x1="2536" y1="281" x2="2566" y2="830" gradientUnits="userSpaceOnUse">
<stop offset="0" stop-color="#4a5d87"/><stop offset=".119" stop-color="#4a5d87"/><stop offset=".257" stop-color="#60748f"/><stop offset=".411" stop-color="#7a889c"/>
<stop offset=".528" stop-color="#9097a3"/><stop offset=".651" stop-color="#b0aca7"/><stop offset=".774" stop-color="#bebcb7"/><stop offset=".932" stop-color="#bebcb7"/><stop offset="1" stop-color="#b8b5af"/></linearGradient>
<linearGradient id="wat" x1="0" y1="921" x2="0" y2="960" gradientUnits="userSpaceOnUse"><stop offset="0" stop-color="#97a1b3"/><stop offset="1" stop-color="#7f8da6"/></linearGradient>
<linearGradient id="city" x1="0" y1="952" x2="0" y2="1045" gradientUnits="userSpaceOnUse"><stop offset="0" stop-color="#8a8c94"/><stop offset=".3" stop-color="#787a81"/><stop offset=".5" stop-color="#5c5f66"/><stop offset="1" stop-color="#43464d"/></linearGradient>
<linearGradient id="sun" x1="2640" y1="1040" x2="2990" y2="950" gradientUnits="userSpaceOnUse"><stop offset="0" stop-color="#ad8131"/><stop offset=".45" stop-color="#8d722b"/><stop offset="1" stop-color="#71632a"/></linearGradient>
<filter id="nz" filterUnits="userSpaceOnUse" x="2536" y="940" width="700" height="165"><feTurbulence type="fractalNoise" baseFrequency=".35" numOctaves="2" seed="3"/><feColorMatrix values="0 0 0 0 0  0 0 0 0 0  0 0 0 0 0  0 0 0 -1.6 1.05"/><feComposite in2="SourceGraphic" operator="in"/></filter>
<filter id="cz" filterUnits="userSpaceOnUse" x="2536" y="940" width="700" height="165"><feTurbulence type="fractalNoise" baseFrequency=".09 .28" numOctaves="2" seed="7"/><feColorMatrix values="0 0 0 0 .82  0 0 0 0 .84  0 0 0 0 .88  0 0 0 -3.2 1.45"/><feComposite in2="SourceGraphic" operator="in"/></filter>
</defs><rect x="2536" y="285" width="700" height="600" fill="url(#sky)"/><path d="M2840.0 845.0 L2900.0 842.0 L2990.0 840.0 L3060.0 838.0 L3130.0 840.0 L3236.0 835.0 L3236.0 890.0 L2840.0 890.0 Z" fill="#8c8a94"/><path d="M2536.0 824.0 L2562.0 821.5 L2600.0 823.0 L2619.0 824.5 L2662.0 828.5 L2704.0 832.0 L2726.0 830.0 L2747.0 829.3 L2775.0 833.5 L2803.0 838.6 L2860.0 840.6 L2917.0 845.0 L2973.0 852.0 L3030.0 866.0 L3090.0 884.0 L3090.0 890.0 L2536.0 890.0 Z" fill="#746e75"/><path d="M3236.0 836.0 L3200.0 845.0 L3150.0 855.0 L3100.0 864.0 L3040.0 872.0 L2985.0 880.0 L2950.0 884.0 L2950.0 894.0 L3236.0 894.0 Z" fill="#6f6c76"/><rect x="2536" y="878" width="700" height="48" fill="#8d97a9"/><path d="M2850.0 884.0 L2900.0 882.0 L2960.0 883.0 L3000.0 886.0 L2960.0 888.0 L2850.0 888.0 Z" fill="#6a6872"/><path d="M2536.0 894.0 L2650.0 893.0 L2780.0 894.0 L2900.0 899.0 L3000.0 903.0 L3090.0 910.0 L3150.0 914.0 L3236.0 916.0 L3236.0 922.0 L3100.0 921.0 L2900.0 922.0 L2700.0 923.0 L2536.0 924.0 Z" fill="#68676f"/><rect x="2536" y="920" width="700" height="42" fill="url(#wat)"/><path d="M2536.0 922.0 L2600.0 924.0 L2680.0 928.0 L2700.0 931.0 L2600.0 932.0 L2536.0 931.0 Z" fill="#7a7b85" opacity=".8"/><path d="M2536.0 958.0 L2640.0 955.0 L2760.0 953.0 L2900.0 956.0 L3060.0 952.0 L3150.0 954.0 L3236.0 958.0 L3236.0 1100.0 L2536.0 1100.0 Z" fill="url(#city)"/><path d="M2536 960 L2640 957 L2760 955 L2900 958 L3060 954 L3236 960 V1100 H2536 Z" filter="url(#cz)" opacity=".27"/><rect x="2852.1" y="975.0" width="9.4" height="2.9" fill="#55575f" opacity="0.83"/><rect x="2671.0" y="983.3" width="5.8" height="3.3" fill="#b4b6be" opacity="0.49"/><rect x="2749.3" y="959.1" width="8.5" height="3.6" fill="#c9cbd2" opacity="0.72"/><rect x="2813.4" y="971.4" width="7.9" height="3.5" fill="#55575f" opacity="0.46"/><rect x="2904.6" y="958.0" width="3.5" height="2.2" fill="#c9cbd2" opacity="0.80"/><rect x="2765.1" y="976.1" width="3.6" height="2.2" fill="#d9dadf" opacity="0.67"/><rect x="2997.1" y="971.5" width="4.2" height="4.5" fill="#c9cbd2" opacity="0.77"/><rect x="2757.5" y="963.8" width="4.3" height="1.7" fill="#c9cbd2" opacity="0.63"/><rect x="3124.1" y="969.1" width="9.7" height="4.0" fill="#c9cbd2" opacity="0.55"/><rect x="3179.7" y="957.8" width="5.0" height="3.6" fill="#a3a5ad" opacity="0.48"/><rect x="2974.3" y="982.5" width="4.2" height="1.8" fill="#d9dadf" opacity="0.46"/><rect x="2822.9" y="987.4" width="3.1" height="3.6" fill="#c9cbd2" opacity="0.48"/><rect x="3089.9" y="962.0" width="6.5" height="2.8" fill="#b4b6be" opacity="0.89"/><rect x="3071.0" y="970.3" width="5.1" height="2.7" fill="#b4b6be" opacity="0.45"/><rect x="3136.4" y="989.1" width="6.7" height="4.5" fill="#c9cbd2" opacity="0.54"/><rect x="2812.0" y="985.0" width="7.1" height="1.8" fill="#b4b6be" opacity="0.55"/><rect x="2718.2" y="982.3" width="4.6" height="2.4" fill="#c9cbd2" opacity="0.48"/><rect x="2684.0" y="977.6" width="2.1" height="2.6" fill="#55575f" opacity="0.65"/><rect x="3201.8" y="972.4" width="6.6" height="4.1" fill="#b4b6be" opacity="0.73"/><rect x="2754.5" y="963.8" width="6.9" height="3.7" fill="#b4b6be" opacity="0.78"/><rect x="3188.9" y="962.7" width="9.6" height="4.1" fill="#55575f" opacity="0.49"/><rect x="2572.7" y="959.7" width="6.1" height="2.3" fill="#4a4c54" opacity="0.77"/><rect x="2717.3" y="984.0" width="6.8" height="2.4" fill="#b4b6be" opacity="0.87"/><rect x="3214.3" y="960.3" width="5.8" height="3.5" fill="#55575f" opacity="0.73"/><rect x="2733.4" y="987.2" width="3.6" height="1.5" fill="#d9dadf" opacity="0.64"/><rect x="2711.9" y="957.6" width="4.3" height="3.1" fill="#b4b6be" opacity="0.49"/><rect x="2635.5" y="971.3" width="4.6" height="3.7" fill="#55575f" opacity="0.71"/><rect x="2636.8" y="957.2" width="2.1" height="4.2" fill="#4a4c54" opacity="0.59"/><rect x="2563.1" y="976.3" width="2.6" height="1.7" fill="#d9dadf" opacity="0.59"/><rect x="3229.6" y="958.6" width="6.4" height="3.7" fill="#4a4c54" opacity="0.78"/><rect x="2629.4" y="988.8" width="4.7" height="1.8" fill="#a3a5ad" opacity="0.86"/><rect x="3141.1" y="970.2" width="8.3" height="4.1" fill="#55575f" opacity="0.46"/><rect x="2997.0" y="968.9" width="2.1" height="1.7" fill="#c9cbd2" opacity="0.74"/><rect x="3225.4" y="985.9" width="7.8" height="2.7" fill="#4a4c54" opacity="0.76"/><rect x="2855.9" y="971.7" width="6.3" height="3.1" fill="#55575f" opacity="0.46"/><rect x="2954.9" y="972.4" width="3.8" height="3.6" fill="#a3a5ad" opacity="0.80"/><rect x="2995.5" y="972.5" width="9.2" height="2.6" fill="#b4b6be" opacity="0.76"/><rect x="2679.8" y="961.8" width="9.2" height="3.5" fill="#a3a5ad" opacity="0.67"/><rect x="2706.6" y="969.8" width="4.0" height="3.4" fill="#b4b6be" opacity="0.85"/><rect x="2805.2" y="975.8" width="4.5" height="1.9" fill="#a3a5ad" opacity="0.61"/><rect x="3158.0" y="957.4" width="2.5" height="4.4" fill="#b4b6be" opacity="0.50"/><rect x="2865.2" y="987.5" width="8.6" height="2.6" fill="#55575f" opacity="0.67"/><rect x="2757.6" y="984.5" width="9.9" height="2.9" fill="#c9cbd2" opacity="0.82"/><rect x="2731.9" y="976.7" width="7.4" height="2.3" fill="#d9dadf" opacity="0.59"/><rect x="3086.1" y="956.6" width="3.1" height="2.9" fill="#c9cbd2" opacity="0.80"/><rect x="2723.8" y="982.5" width="8.4" height="4.5" fill="#c9cbd2" opacity="0.65"/><rect x="2974.7" y="978.3" width="8.5" height="4.4" fill="#4a4c54" opacity="0.54"/><rect x="3108.4" y="964.7" width="7.7" height="3.8" fill="#55575f" opacity="0.77"/><rect x="2663.6" y="965.3" width="4.8" height="3.6" fill="#55575f" opacity="0.68"/><rect x="3227.8" y="961.4" width="8.8" height="3.6" fill="#b4b6be" opacity="0.49"/><rect x="3183.5" y="980.6" width="3.0" height="2.9" fill="#4a4c54" opacity="0.85"/><rect x="2544.6" y="974.7" width="7.2" height="3.0" fill="#d9dadf" opacity="0.66"/><rect x="2989.4" y="963.0" width="7.8" height="4.0" fill="#4a4c54" opacity="0.87"/><rect x="2625.2" y="964.2" width="5.1" height="1.8" fill="#d9dadf" opacity="0.69"/><rect x="3085.6" y="966.9" width="9.3" height="4.1" fill="#d9dadf" opacity="0.68"/><rect x="2565.6" y="967.6" width="5.4" height="2.3" fill="#c9cbd2" opacity="0.55"/><rect x="3138.6" y="970.6" width="2.3" height="3.1" fill="#4a4c54" opacity="0.80"/><rect x="2636.9" y="961.1" width="6.1" height="3.7" fill="#4a4c54" opacity="0.76"/><rect x="3192.6" y="972.7" width="9.6" height="1.8" fill="#b4b6be" opacity="0.65"/><rect x="2925.6" y="984.3" width="6.5" height="2.0" fill="#55575f" opacity="0.83"/><rect x="2926.4" y="966.6" width="5.0" height="4.0" fill="#55575f" opacity="0.54"/><rect x="3127.0" y="988.9" width="6.2" height="3.2" fill="#b4b6be" opacity="0.63"/><rect x="2618.9" y="956.2" width="5.0" height="3.1" fill="#c9cbd2" opacity="0.68"/><rect x="2816.4" y="983.2" width="6.5" height="3.0" fill="#4a4c54" opacity="0.53"/><rect x="3182.3" y="971.6" width="9.4" height="3.9" fill="#a3a5ad" opacity="0.57"/><rect x="2866.5" y="960.3" width="5.5" height="3.9" fill="#a3a5ad" opacity="0.69"/><rect x="2614.9" y="970.3" width="2.2" height="2.3" fill="#4a4c54" opacity="0.80"/><rect x="2555.7" y="962.6" width="3.8" height="3.6" fill="#d9dadf" opacity="0.78"/><rect x="2708.7" y="973.0" width="6.0" height="3.2" fill="#55575f" opacity="0.73"/><rect x="3035.2" y="979.8" width="9.0" height="1.6" fill="#4a4c54" opacity="0.64"/><rect x="2905.2" y="961.4" width="3.6" height="3.4" fill="#4a4c54" opacity="0.55"/><rect x="2689.2" y="974.5" width="6.7" height="1.9" fill="#4a4c54" opacity="0.73"/><rect x="2779.8" y="962.2" width="6.8" height="4.2" fill="#b4b6be" opacity="0.55"/><rect x="3228.9" y="986.2" width="3.1" height="2.2" fill="#4a4c54" opacity="0.49"/><rect x="2807.7" y="970.8" width="9.5" height="3.1" fill="#4a4c54" opacity="0.51"/><rect x="2817.9" y="979.3" width="2.1" height="2.1" fill="#4a4c54" opacity="0.61"/><rect x="3106.5" y="968.3" width="7.6" height="3.4" fill="#d9dadf" opacity="0.68"/><rect x="3013.1" y="962.4" width="2.6" height="1.8" fill="#c9cbd2" opacity="0.79"/><rect x="2963.2" y="986.8" width="5.9" height="2.1" fill="#c9cbd2" opacity="0.54"/><rect x="3119.7" y="989.7" width="9.4" height="1.8" fill="#c9cbd2" opacity="0.51"/><rect x="3009.9" y="958.6" width="2.8" height="2.7" fill="#a3a5ad" opacity="0.68"/><rect x="2836.8" y="976.4" width="2.1" height="3.6" fill="#b4b6be" opacity="0.53"/><rect x="2853.2" y="981.1" width="5.2" height="2.1" fill="#b4b6be" opacity="0.49"/><rect x="3086.7" y="967.0" width="2.7" height="4.0" fill="#4a4c54" opacity="0.87"/><rect x="2933.1" y="962.5" width="6.7" height="2.5" fill="#d9dadf" opacity="0.58"/><rect x="2620.2" y="981.3" width="3.3" height="4.3" fill="#b4b6be" opacity="0.85"/><rect x="3147.1" y="979.6" width="8.1" height="3.8" fill="#a3a5ad" opacity="0.54"/><rect x="2667.5" y="983.1" width="4.4" height="1.8" fill="#d9dadf" opacity="0.90"/><rect x="3162.9" y="957.7" width="4.2" height="4.4" fill="#d9dadf" opacity="0.60"/><rect x="2995.2" y="975.4" width="6.3" height="2.7" fill="#a3a5ad" opacity="0.74"/><rect x="3023.9" y="981.9" width="9.8" height="1.6" fill="#55575f" opacity="0.50"/><rect x="2703.6" y="971.1" width="6.0" height="3.8" fill="#4a4c54" opacity="0.62"/><rect x="2607.9" y="964.5" width="9.2" height="3.2" fill="#55575f" opacity="0.64"/><rect x="2899.3" y="984.8" width="2.8" height="2.8" fill="#4a4c54" opacity="0.48"/><rect x="2952.3" y="981.8" width="2.4" height="4.3" fill="#b4b6be" opacity="0.62"/><rect x="3209.3" y="985.1" width="6.3" height="3.3" fill="#a3a5ad" opacity="0.88"/><rect x="2830.3" y="973.9" width="6.8" height="2.6" fill="#d9dadf" opacity="0.67"/><rect x="2726.1" y="987.6" width="7.3" height="3.7" fill="#c9cbd2" opacity="0.46"/><rect x="2709.1" y="957.5" width="3.3" height="3.8" fill="#a3a5ad" opacity="0.47"/><rect x="2757.4" y="969.5" width="6.7" height="3.7" fill="#d9dadf" opacity="0.48"/><rect x="3164.8" y="970.6" width="5.8" height="4.4" fill="#b4b6be" opacity="0.47"/><rect x="2607.9" y="983.5" width="9.3" height="1.9" fill="#b4b6be" opacity="0.72"/><rect x="2619.4" y="977.2" width="5.6" height="2.1" fill="#c9cbd2" opacity="0.61"/><rect x="2646.8" y="968.4" width="3.1" height="2.8" fill="#55575f" opacity="0.57"/><rect x="2941.7" y="970.3" width="8.2" height="3.1" fill="#b4b6be" opacity="0.88"/><rect x="3046.7" y="964.1" width="2.9" height="4.2" fill="#55575f" opacity="0.73"/><rect x="2787.8" y="965.2" width="7.5" height="3.2" fill="#55575f" opacity="0.54"/><rect x="2732.3" y="964.1" width="9.6" height="3.0" fill="#4a4c54" opacity="0.86"/><rect x="3146.4" y="957.3" width="2.5" height="2.3" fill="#a3a5ad" opacity="0.46"/><rect x="2566.3" y="963.6" width="4.2" height="3.8" fill="#4a4c54" opacity="0.52"/><rect x="2702.0" y="989.4" width="5.9" height="2.6" fill="#d9dadf" opacity="0.60"/><rect x="3053.9" y="984.5" width="2.6" height="1.9" fill="#55575f" opacity="0.83"/><rect x="3070.6" y="971.1" width="8.0" height="2.7" fill="#b4b6be" opacity="0.62"/><rect x="2991.0" y="989.6" width="4.6" height="3.1" fill="#4a4c54" opacity="0.82"/><rect x="2666.9" y="978.2" width="6.6" height="2.9" fill="#d9dadf" opacity="0.49"/><rect x="2597.3" y="975.2" width="5.9" height="3.6" fill="#d9dadf" opacity="0.82"/><rect x="2546.4" y="966.5" width="9.3" height="3.3" fill="#4a4c54" opacity="0.59"/><rect x="3040.2" y="979.6" width="4.3" height="1.9" fill="#d9dadf" opacity="0.75"/><rect x="2765.7" y="986.8" width="4.6" height="2.8" fill="#55575f" opacity="0.86"/><rect x="3188.6" y="987.1" width="5.5" height="3.9" fill="#d9dadf" opacity="0.66"/><rect x="2692.6" y="988.9" width="7.8" height="3.0" fill="#c9cbd2" opacity="0.61"/><rect x="2792.2" y="968.4" width="5.2" height="2.7" fill="#b4b6be" opacity="0.78"/><rect x="2794.1" y="969.3" width="3.2" height="3.3" fill="#b4b6be" opacity="0.53"/><rect x="3063.7" y="986.0" width="4.3" height="1.6" fill="#55575f" opacity="0.48"/><rect x="2649.5" y="966.1" width="2.2" height="4.0" fill="#a3a5ad" opacity="0.48"/><rect x="2917.3" y="982.8" width="2.7" height="1.7" fill="#4a4c54" opacity="0.50"/><rect x="2756.5" y="956.9" width="7.2" height="1.8" fill="#4a4c54" opacity="0.64"/><rect x="3031.4" y="972.6" width="9.3" height="2.5" fill="#a3a5ad" opacity="0.63"/><rect x="2773.1" y="988.9" width="7.4" height="3.0" fill="#55575f" opacity="0.81"/><rect x="2590.0" y="977.0" width="2.4" height="3.8" fill="#4a4c54" opacity="0.61"/><rect x="2542.7" y="968.9" width="2.7" height="2.9" fill="#55575f" opacity="0.74"/><rect x="2901.5" y="980.1" width="8.4" height="2.8" fill="#a3a5ad" opacity="0.86"/><rect x="2709.5" y="961.5" width="7.1" height="3.6" fill="#d9dadf" opacity="0.54"/><rect x="2833.2" y="965.9" width="9.8" height="1.7" fill="#d9dadf" opacity="0.78"/><rect x="2749.4" y="961.3" width="9.4" height="4.2" fill="#a3a5ad" opacity="0.46"/><rect x="2871.9" y="983.2" width="4.5" height="2.1" fill="#d9dadf" opacity="0.55"/><rect x="2702.4" y="980.4" width="6.8" height="2.2" fill="#b4b6be" opacity="0.85"/><rect x="2817.7" y="987.0" width="9.5" height="3.4" fill="#55575f" opacity="0.67"/><rect x="2719.7" y="986.2" width="9.3" height="2.5" fill="#55575f" opacity="0.80"/><rect x="2603.8" y="985.3" width="5.2" height="2.2" fill="#b4b6be" opacity="0.81"/><rect x="2805.6" y="973.9" width="6.1" height="2.3" fill="#c9cbd2" opacity="0.75"/><rect x="2704.0" y="956.4" width="5.8" height="2.6" fill="#b4b6be" opacity="0.77"/><rect x="2958.2" y="961.3" width="3.3" height="2.5" fill="#d9dadf" opacity="0.86"/><rect x="3098.9" y="960.5" width="7.9" height="3.4" fill="#55575f" opacity="0.69"/><rect x="2644.0" y="982.2" width="2.0" height="4.0" fill="#b4b6be" opacity="0.82"/><rect x="2596.9" y="965.2" width="7.7" height="1.8" fill="#a3a5ad" opacity="0.76"/><rect x="2597.2" y="981.5" width="6.3" height="3.0" fill="#c9cbd2" opacity="0.81"/><rect x="2827.7" y="987.2" width="2.7" height="4.0" fill="#b4b6be" opacity="0.47"/><rect x="2825.1" y="972.8" width="9.6" height="4.4" fill="#d9dadf" opacity="0.59"/><rect x="2592.5" y="966.4" width="5.7" height="3.6" fill="#d9dadf" opacity="0.48"/><rect x="2637.0" y="978.7" width="7.4" height="3.7" fill="#c9cbd2" opacity="0.74"/><rect x="2548.5" y="968.8" width="7.7" height="2.2" fill="#55575f" opacity="0.50"/><rect x="3072.6" y="985.1" width="8.8" height="3.7" fill="#55575f" opacity="0.52"/><rect x="2973.2" y="987.9" width="8.0" height="4.4" fill="#a3a5ad" opacity="0.70"/><rect x="2600.0" y="962.4" width="5.0" height="1.8" fill="#d9dadf" opacity="0.88"/><rect x="2928.3" y="980.6" width="4.7" height="4.0" fill="#c9cbd2" opacity="0.50"/><rect x="2969.0" y="960.5" width="7.0" height="2.0" fill="#b4b6be" opacity="0.63"/><rect x="3117.5" y="976.2" width="2.7" height="2.2" fill="#b4b6be" opacity="0.89"/><rect x="2839.3" y="982.2" width="4.7" height="4.0" fill="#55575f" opacity="0.51"/><rect x="2681.8" y="961.0" width="7.5" height="2.9" fill="#a3a5ad" opacity="0.73"/><rect x="3041.6" y="976.8" width="4.5" height="3.9" fill="#b4b6be" opacity="0.75"/><rect x="2959.9" y="956.6" width="4.6" height="2.5" fill="#4a4c54" opacity="0.65"/><rect x="2924.5" y="963.0" width="4.7" height="2.4" fill="#c9cbd2" opacity="0.73"/><rect x="2649.3" y="982.1" width="9.2" height="3.1" fill="#d9dadf" opacity="0.73"/><rect x="2894.3" y="975.5" width="3.6" height="4.3" fill="#4a4c54" opacity="0.77"/><rect x="3185.8" y="975.3" width="2.2" height="3.5" fill="#c9cbd2" opacity="0.51"/><rect x="2869.7" y="970.2" width="4.7" height="1.8" fill="#d9dadf" opacity="0.57"/><rect x="3149.3" y="971.4" width="7.8" height="2.2" fill="#55575f" opacity="0.69"/><rect x="2926.9" y="975.1" width="4.1" height="4.2" fill="#d9dadf" opacity="0.72"/><rect x="2624.6" y="984.0" width="4.3" height="4.2" fill="#b4b6be" opacity="0.79"/><rect x="2867.5" y="1022.2" width="10.3" height="1.9" fill="#8d9098" opacity="0.90"/><rect x="2873.0" y="1021.5" width="8.1" height="3.7" fill="#73767e" opacity="0.70"/><rect x="2996.3" y="995.6" width="7.8" height="1.9" fill="#73767e" opacity="0.48"/><rect x="3105.0" y="991.9" width="10.6" height="2.3" fill="#34373d" opacity="0.81"/><rect x="2600.3" y="1035.8" width="12.0" height="3.2" fill="#73767e" opacity="0.49"/><rect x="3221.1" y="1037.2" width="4.2" height="2.6" fill="#73767e" opacity="0.69"/><rect x="3148.6" y="1017.0" width="13.7" height="3.7" fill="#9fa1a8" opacity="0.53"/><rect x="3102.8" y="1008.8" width="7.6" height="3.0" fill="#34373d" opacity="0.72"/><rect x="2913.4" y="1021.3" width="3.9" height="2.0" fill="#3c3f46" opacity="0.61"/><rect x="2790.6" y="1023.9" width="10.4" height="1.8" fill="#73767e" opacity="0.60"/><rect x="2796.2" y="1017.8" width="11.4" height="1.9" fill="#34373d" opacity="0.82"/><rect x="2836.8" y="1015.0" width="5.4" height="2.6" fill="#34373d" opacity="0.54"/><rect x="2959.0" y="1027.2" width="5.4" height="1.7" fill="#3c3f46" opacity="0.47"/><rect x="2730.8" y="1005.9" width="10.0" height="1.6" fill="#34373d" opacity="0.62"/><rect x="2774.4" y="1011.7" width="10.7" height="3.6" fill="#73767e" opacity="0.88"/><rect x="2655.6" y="1036.1" width="7.0" height="2.0" fill="#73767e" opacity="0.86"/><rect x="2544.6" y="1001.9" width="11.5" height="2.4" fill="#73767e" opacity="0.81"/><rect x="2886.0" y="1000.9" width="4.3" height="2.4" fill="#9fa1a8" opacity="0.68"/><rect x="2556.5" y="1004.8" width="11.7" height="3.6" fill="#8d9098" opacity="0.55"/><rect x="2903.8" y="1012.8" width="9.9" height="2.2" fill="#34373d" opacity="0.85"/><rect x="2651.9" y="1003.1" width="12.6" height="2.2" fill="#9fa1a8" opacity="0.74"/><rect x="2847.1" y="1029.2" width="11.1" height="2.8" fill="#8d9098" opacity="0.76"/><rect x="3018.9" y="994.9" width="12.8" height="2.6" fill="#73767e" opacity="0.54"/><rect x="2865.5" y="991.1" width="9.3" height="3.3" fill="#3c3f46" opacity="0.79"/><rect x="2828.2" y="1018.6" width="12.9" height="3.5" fill="#9fa1a8" opacity="0.70"/><rect x="3216.2" y="1021.2" width="7.2" height="1.9" fill="#73767e" opacity="0.86"/><rect x="3090.4" y="1034.7" width="13.0" height="2.8" fill="#34373d" opacity="0.81"/><rect x="3030.1" y="997.8" width="6.0" height="3.5" fill="#9fa1a8" opacity="0.67"/><rect x="2961.7" y="999.0" width="9.6" height="3.2" fill="#9fa1a8" opacity="0.56"/><rect x="2820.7" y="1004.8" width="10.5" height="1.9" fill="#8d9098" opacity="0.77"/><rect x="2754.3" y="997.3" width="10.5" height="3.1" fill="#34373d" opacity="0.61"/><rect x="2560.5" y="1013.4" width="7.9" height="1.9" fill="#9fa1a8" opacity="0.60"/><rect x="2704.5" y="1005.0" width="13.4" height="1.5" fill="#3c3f46" opacity="0.61"/><rect x="3125.7" y="1023.8" width="6.3" height="2.8" fill="#73767e" opacity="0.68"/><rect x="3021.7" y="996.4" width="8.1" height="3.0" fill="#73767e" opacity="0.66"/><rect x="3082.0" y="990.6" width="11.5" height="2.5" fill="#34373d" opacity="0.68"/><rect x="2843.5" y="990.7" width="4.2" height="2.9" fill="#3c3f46" opacity="0.61"/><rect x="3045.3" y="1004.8" width="8.5" height="2.4" fill="#3c3f46" opacity="0.53"/><rect x="2869.2" y="1029.6" width="4.5" height="2.7" fill="#34373d" opacity="0.81"/><rect x="2737.1" y="1036.7" width="9.6" height="2.5" fill="#9fa1a8" opacity="0.59"/><rect x="2626.8" y="1021.3" width="12.3" height="3.0" fill="#34373d" opacity="0.64"/><rect x="2966.3" y="1001.7" width="7.5" height="2.4" fill="#34373d" opacity="0.87"/><rect x="3102.2" y="997.5" width="11.7" height="3.6" fill="#8d9098" opacity="0.89"/><rect x="2900.7" y="990.8" width="12.2" height="3.7" fill="#3c3f46" opacity="0.89"/><rect x="3171.4" y="1028.1" width="12.4" height="2.3" fill="#73767e" opacity="0.79"/><rect x="3133.1" y="1016.9" width="3.5" height="3.5" fill="#73767e" opacity="0.52"/><rect x="3033.9" y="1003.4" width="5.1" height="2.0" fill="#3c3f46" opacity="0.70"/><rect x="2555.0" y="1035.4" width="7.0" height="2.7" fill="#73767e" opacity="0.65"/><rect x="2904.0" y="1021.9" width="11.8" height="2.8" fill="#3c3f46" opacity="0.66"/><rect x="2977.5" y="1008.2" width="7.6" height="2.8" fill="#3c3f46" opacity="0.46"/><rect x="2647.0" y="1027.4" width="7.0" height="1.8" fill="#34373d" opacity="0.70"/><rect x="3204.2" y="1007.5" width="3.8" height="3.8" fill="#3c3f46" opacity="0.48"/><rect x="2614.6" y="992.4" width="3.6" height="1.5" fill="#73767e" opacity="0.46"/><rect x="3013.8" y="1017.4" width="13.2" height="3.3" fill="#8d9098" opacity="0.72"/><rect x="2945.1" y="1029.8" width="9.9" height="2.7" fill="#3c3f46" opacity="0.64"/><rect x="2914.7" y="1004.4" width="5.7" height="1.7" fill="#9fa1a8" opacity="0.60"/><rect x="2580.5" y="1029.4" width="10.5" height="4.0" fill="#73767e" opacity="0.58"/><rect x="3177.2" y="1019.2" width="10.4" height="1.5" fill="#73767e" opacity="0.51"/><rect x="2840.8" y="1005.7" width="7.5" height="2.3" fill="#9fa1a8" opacity="0.62"/><rect x="3135.0" y="1039.5" width="8.3" height="2.0" fill="#9fa1a8" opacity="0.74"/><rect x="2967.5" y="991.3" width="6.8" height="2.2" fill="#9fa1a8" opacity="0.51"/><rect x="2913.2" y="1037.5" width="11.2" height="2.1" fill="#34373d" opacity="0.90"/><rect x="2622.3" y="1018.5" width="8.4" height="2.4" fill="#73767e" opacity="0.72"/><rect x="2938.3" y="1007.7" width="6.4" height="2.4" fill="#3c3f46" opacity="0.87"/><rect x="2952.8" y="991.7" width="9.9" height="3.7" fill="#3c3f46" opacity="0.73"/><rect x="2965.0" y="1032.6" width="4.6" height="2.3" fill="#34373d" opacity="0.47"/><rect x="2766.7" y="1015.9" width="12.2" height="2.8" fill="#3c3f46" opacity="0.52"/><rect x="2875.0" y="992.7" width="6.4" height="3.5" fill="#73767e" opacity="0.58"/><rect x="3120.4" y="1000.1" width="5.2" height="3.1" fill="#73767e" opacity="0.72"/><rect x="2870.4" y="1037.9" width="8.0" height="3.8" fill="#34373d" opacity="0.65"/><rect x="2808.2" y="1002.2" width="12.9" height="2.0" fill="#9fa1a8" opacity="0.69"/><rect x="3041.3" y="1014.1" width="10.3" height="3.0" fill="#3c3f46" opacity="0.61"/><rect x="2751.5" y="989.3" width="12.8" height="3.5" fill="#34373d" opacity="0.75"/><rect x="2740.0" y="1013.0" width="10.6" height="2.8" fill="#9fa1a8" opacity="0.59"/><rect x="2718.8" y="1009.5" width="3.6" height="1.6" fill="#8d9098" opacity="0.69"/><rect x="2709.5" y="999.0" width="11.6" height="2.9" fill="#9fa1a8" opacity="0.67"/><rect x="2954.9" y="1036.5" width="4.6" height="2.1" fill="#9fa1a8" opacity="0.86"/><rect x="3182.9" y="1015.5" width="7.0" height="2.0" fill="#73767e" opacity="0.79"/><rect x="2920.6" y="1029.2" width="5.9" height="2.8" fill="#34373d" opacity="0.50"/><rect x="2966.0" y="997.6" width="12.2" height="3.6" fill="#8d9098" opacity="0.65"/><rect x="2554.8" y="1013.7" width="7.0" height="2.5" fill="#8d9098" opacity="0.70"/><rect x="3168.3" y="1011.7" width="11.7" height="3.9" fill="#9fa1a8" opacity="0.63"/><rect x="2545.6" y="1014.2" width="7.6" height="1.9" fill="#3c3f46" opacity="0.81"/><rect x="2904.1" y="1020.4" width="13.9" height="2.0" fill="#34373d" opacity="0.58"/><rect x="2895.5" y="1008.5" width="3.9" height="3.2" fill="#8d9098" opacity="0.84"/><rect x="2988.6" y="1006.9" width="6.2" height="1.7" fill="#8d9098" opacity="0.82"/><rect x="2619.2" y="1030.0" width="3.7" height="1.9" fill="#9fa1a8" opacity="0.69"/><rect x="2662.2" y="1031.0" width="12.5" height="3.9" fill="#73767e" opacity="0.82"/><rect x="2553.5" y="995.5" width="8.0" height="2.6" fill="#3c3f46" opacity="0.79"/><rect x="3108.5" y="1027.0" width="6.1" height="3.4" fill="#34373d" opacity="0.54"/><rect x="3198.6" y="1036.4" width="6.9" height="2.2" fill="#9fa1a8" opacity="0.67"/><rect x="2826.3" y="1004.9" width="9.2" height="2.8" fill="#9fa1a8" opacity="0.73"/><rect x="2922.8" y="988.5" width="9.9" height="2.9" fill="#73767e" opacity="0.87"/><rect x="2579.7" y="1004.5" width="13.3" height="3.2" fill="#73767e" opacity="0.85"/><rect x="2600.3" y="1037.8" width="9.7" height="3.4" fill="#3c3f46" opacity="0.90"/><rect x="3077.7" y="1010.7" width="13.0" height="2.3" fill="#8d9098" opacity="0.73"/><rect x="3221.3" y="1004.4" width="10.6" height="3.8" fill="#73767e" opacity="0.73"/><rect x="3110.0" y="1022.8" width="8.4" height="3.5" fill="#73767e" opacity="0.68"/><rect x="3004.7" y="1012.3" width="11.5" height="3.3" fill="#73767e" opacity="0.83"/><rect x="3007.8" y="1018.7" width="4.9" height="2.7" fill="#34373d" opacity="0.89"/><rect x="2619.1" y="1021.8" width="5.3" height="2.1" fill="#8d9098" opacity="0.60"/><rect x="3221.6" y="1023.6" width="8.7" height="2.6" fill="#34373d" opacity="0.86"/><rect x="2656.5" y="1032.0" width="9.3" height="1.9" fill="#9fa1a8" opacity="0.51"/><rect x="2913.6" y="996.7" width="6.6" height="3.0" fill="#73767e" opacity="0.47"/><rect x="2865.6" y="1032.3" width="11.2" height="1.8" fill="#8d9098" opacity="0.84"/><rect x="2857.6" y="1039.7" width="9.2" height="2.1" fill="#34373d" opacity="0.81"/><rect x="3209.8" y="1034.5" width="8.7" height="3.0" fill="#9fa1a8" opacity="0.84"/><rect x="2719.9" y="992.1" width="4.8" height="2.2" fill="#9fa1a8" opacity="0.85"/><rect x="3002.1" y="1010.2" width="3.5" height="3.6" fill="#73767e" opacity="0.88"/><rect x="2974.9" y="1028.0" width="9.1" height="3.2" fill="#8d9098" opacity="0.45"/><rect x="2733.7" y="953.6" width="7.4" height="14.8" fill="#9a9ca4" opacity="0.74"/><rect x="2786.6" y="956.2" width="7.2" height="9.5" fill="#9a9ca4" opacity="0.69"/><rect x="2727.8" y="948.1" width="6.2" height="14.7" fill="#b0b2b9" opacity="0.90"/><rect x="2829.1" y="955.7" width="4.4" height="14.4" fill="#84868e" opacity="0.82"/><rect x="2796.8" y="957.3" width="8.0" height="10.1" fill="#9a9ca4" opacity="0.67"/><rect x="2798.2" y="951.9" width="6.1" height="10.9" fill="#84868e" opacity="0.74"/><rect x="2785.2" y="948.8" width="7.0" height="13.1" fill="#84868e" opacity="0.76"/><rect x="2772.0" y="954.5" width="4.7" height="13.4" fill="#84868e" opacity="0.69"/><rect x="2738.1" y="946.5" width="5.8" height="11.0" fill="#84868e" opacity="0.72"/><rect x="2751.4" y="945.8" width="6.5" height="9.9" fill="#9a9ca4" opacity="0.85"/><rect x="2791.2" y="945.8" width="6.2" height="13.0" fill="#84868e" opacity="0.63"/><rect x="2793.5" y="957.1" width="4.2" height="9.1" fill="#b0b2b9" opacity="0.83"/><rect x="2783.1" y="946.2" width="6.1" height="14.9" fill="#84868e" opacity="0.54"/><rect x="2811.0" y="949.2" width="7.6" height="9.1" fill="#b0b2b9" opacity="0.72"/><rect x="2768" y="945" width="9" height="18" fill="#85878f"/><rect x="2779" y="947" width="8" height="16" fill="#9a9ca3"/><rect x="2792" y="946" width="6" height="17" fill="#7d7f87"/><rect x="2565" y="956" width="40" height="6" fill="#9c9ea6"/><clipPath id="hc"><path d="M2600.0 1058.0 C2606.6 1055.2 2618.3 1049.5 2639.3 1041.3 C2660.3 1033.1 2698.1 1019.6 2726.2 1008.7 C2754.3 997.8 2782.8 984.7 2807.7 976.1 C2832.6 967.5 2855.3 961.6 2875.7 957.1 C2896.1 952.6 2911.9 950.5 2930.0 948.9 C2948.1 947.3 2964.9 947.4 2984.4 947.6 C3003.9 947.8 3026.5 946.4 3046.9 950.3 C3067.3 954.1 3087.7 962.3 3106.7 970.7 C3125.7 979.1 3139.4 987.0 3161.0 1000.5 C3182.6 1014.0 3219.5 1040.4 3236.0 1052.0 C3252.5 1063.6 3256.0 1067.0 3260.0 1070.0 L3260 1110 L2600 1110 Z"/></clipPath><path d="M2600.0 1058.0 C2606.6 1055.2 2618.3 1049.5 2639.3 1041.3 C2660.3 1033.1 2698.1 1019.6 2726.2 1008.7 C2754.3 997.8 2782.8 984.7 2807.7 976.1 C2832.6 967.5 2855.3 961.6 2875.7 957.1 C2896.1 952.6 2911.9 950.5 2930.0 948.9 C2948.1 947.3 2964.9 947.4 2984.4 947.6 C3003.9 947.8 3026.5 946.4 3046.9 950.3 C3067.3 954.1 3087.7 962.3 3106.7 970.7 C3125.7 979.1 3139.4 987.0 3161.0 1000.5 C3182.6 1014.0 3219.5 1040.4 3236.0 1052.0 C3252.5 1063.6 3256.0 1067.0 3260.0 1070.0 L3260 1110 L2600 1110 Z" fill="#3a3a2a"/><g clip-path="url(#hc)"><path d="M3005.0 940.0 C3005.8 942.0 3013.3 947.7 3010.0 952.0 C3006.7 956.3 2995.0 960.3 2985.0 966.0 C2975.0 971.7 2961.2 978.7 2950.0 986.0 C2938.8 993.3 2927.0 1002.7 2918.0 1010.0 C2909.0 1017.3 2902.3 1023.3 2896.0 1030.0 C2889.7 1036.7 2882.7 1046.7 2880.0 1050.0 L2880 1110 L2560 1110 L2560 930 Z" fill="url(#sun)"/><path d="M2870.0 950.0 C2880.0 949.0 2906.7 944.7 2930.0 944.0 C2953.3 943.3 3000.0 943.0 3010.0 946.0 C3020.0 949.0 3000.0 957.2 2990.0 962.0 C2980.0 966.8 2965.0 971.2 2950.0 975.0 C2935.0 978.8 2915.0 985.0 2900.0 985.0 C2885.0 985.0 2866.7 976.7 2860.0 975.0 Z" fill="#5f5a2c" opacity=".55"/><path d="M2995.0 951.0 C3003.3 951.0 3044.2 948.2 3045.0 951.0 C3045.8 953.8 3014.2 961.5 3000.0 968.0 C2985.8 974.5 2972.5 982.2 2960.0 990.0 C2947.5 997.8 2935.0 1006.3 2925.0 1015.0 C2915.0 1023.7 2905.8 1034.5 2900.0 1042.0 C2894.2 1049.5 2891.7 1057.0 2890.0 1060.0 L2850 1060 L2872 1032 L2903 1005 L2938 982 L2968 965 Z" fill="#4c493b"/><path d="M3042.0 953.0 C3035.8 955.2 3017.3 960.2 3005.0 966.0 C2992.7 971.8 2979.7 980.0 2968.0 988.0 C2956.3 996.0 2945.0 1004.5 2935.0 1014.0 C2925.0 1023.5 2912.5 1039.8 2908.0 1045.0" fill="none" stroke="#a88334" stroke-width="3.2"/><path d="M2822.0 988.0 C2820.3 990.3 2814.0 996.7 2812.0 1002.0 C2810.0 1007.3 2809.0 1012.8 2810.0 1020.0 C2811.0 1027.2 2816.7 1040.8 2818.0 1045.0" fill="none" stroke="#3f3b24" stroke-width="4.5" opacity=".9"/><path d="M2925.0 960.0 C2920.0 963.0 2904.5 971.3 2895.0 978.0 C2885.5 984.7 2875.5 992.2 2868.0 1000.0 C2860.5 1007.8 2854.3 1017.5 2850.0 1025.0 C2845.7 1032.5 2843.3 1041.7 2842.0 1045.0" fill="none" stroke="#443f26" stroke-width="9" opacity=".75"/><path d="M2880.0 965.0 C2876.7 966.7 2866.7 971.7 2860.0 975.0 C2853.3 978.3 2843.3 983.3 2840.0 985.0" fill="none" stroke="#4a4528" stroke-width="5" opacity=".6"/><rect x="2560" y="940" width="700" height="170" filter="url(#nz)" opacity=".34"/></g><rect x="2985" y="788" width="5.5" height="164" fill="#8b6a2c"/><rect x="2988.5" y="788" width="2" height="164" fill="#5e4a22"/><ellipse cx="2977" cy="814" rx="6" ry="4.5" fill="#34352f"/><ellipse cx="2998" cy="814" rx="6" ry="4.5" fill="#34352f"/><ellipse cx="2975" cy="824" rx="6" ry="4.5" fill="#34352f"/><ellipse cx="2998" cy="825" rx="6" ry="4.5" fill="#34352f"/><ellipse cx="2993" cy="835" rx="6" ry="4.5" fill="#34352f"/><path d="M2956 936 L2961 928 L2973 927 L2968 935 Z" fill="#33332d"/><rect x="2962" y="935" width="3" height="15" fill="#b7a37a"/><rect x="2966.5" y="935" width="2" height="15" fill="#8a7a58"/><path d="M2993 927 L3006 928 L3012 936 L2999 935 Z" fill="#33332d"/><rect x="3000" y="935" width="3" height="16" fill="#b7a37a"/><rect x="3005" y="935" width="2.5" height="16" fill="#cbbf9f"/></svg>
<div class="t" style="left:2565.0px;top:318.0px;font-size:24.50px;letter-spacing:-1.061px;color:#2f3136;">8:32</div>
<div style="position:absolute;left:2622.0px;top:322.0px;width:15.5px;height:17.0px;background:#2d2f33;border-radius:1.5px"></div>
<div class="t" style="left:2625.2px;top:324.9px;font-size:12.50px;letter-spacing:0.000px;color:#8b97b3;"><b>A</b></div>
<svg style="position:absolute;left:3112px;top:318px" width="80" height="26" viewBox="3112 318 80 26"><path d="M3113 327 A18.5 18.5 0 0 1 3139.5 327 L3126.2 341 Z" fill="#2d2f33"/><path d="M3161.5 321.5 V340 H3143 Z" fill="none" stroke="#2d2f33" stroke-width="2.4"/><path d="M3178 320 h6 v2.5 h2.5 a1.5 1.5 0 0 1 1.5 1.5 V340 a1.5 1.5 0 0 1 -1.5 1.5 h-11 a1.5 1.5 0 0 1 -1.5 -1.5 V324 a1.5 1.5 0 0 1 1.5 -1.5 h2.5 Z" fill="#2d2f33"/></svg>
<div style="position:absolute;left:2859.0px;top:312.0px;width:55.0px;height:55.0px;border-radius:50%;background:#050506"></div>
<div style="position:absolute;left:2872.0px;top:325.0px;width:29.0px;height:29.0px;border-radius:50%;background:radial-gradient(circle,#2a2c30 0,#1a1b1e 45%,#0a0a0b 70%)"></div>
<div style="position:absolute;left:2557.0px;top:384.5px;width:81.0px;height:81.0px;border-radius:50%;background:#47484d"></div>
<svg style="position:absolute;left:2577.5px;top:405.0px" width="40" height="40" viewBox="-20.0 -20.0 40 40" fill="none" stroke="#ffffff" stroke-width="3.20" stroke-linecap="round" stroke-linejoin="round" ><path d="M13 0 H-12 M-2 -11 L-13 0 L-2 11"/></svg>
<div style="position:absolute;left:2535.8px;top:1042.6px;width:699.8px;height:830.0px;background:#e6e6f2;border-radius:48px 48px 0 0"></div>
<div style="position:absolute;left:2859.0px;top:1080.0px;width:54.0px;height:7.5px;background:#46474b;border-radius:4px"></div>
<div class="t" style="left:2577.0px;top:1130.7px;font-size:37.00px;letter-spacing:-0.835px;color:#4a5c86;"><b>Trail Information</b></div>
<svg style="position:absolute;left:3155px;top:1131px" width="40" height="38" viewBox="0 0 24 24"><path d="M12 21.35l-1.45-1.32C5.4 15.36 2 12.28 2 8.5 2 5.42 4.42 3 7.5 3c1.74 0 3.41.81 4.5 2.09C13.09 3.81 14.76 3 16.5 3 19.58 3 22 5.42 22 8.5c0 3.78-3.4 6.86-8.55 11.54L12 21.35z" fill="#775a1a"/></svg>
<div style="position:absolute;left:2577.0px;top:1214.0px;width:191.5px;height:157.7px;box-sizing:border-box;border:1.8px solid #c6c6c6;border-radius:27px"></div>
<div style="position:absolute;left:2789.5px;top:1214.0px;width:191.5px;height:157.7px;box-sizing:border-box;border:1.8px solid #c6c6c6;border-radius:27px"></div>
<div style="position:absolute;left:3003.0px;top:1214.0px;width:191.5px;height:157.7px;box-sizing:border-box;border:1.8px solid #c6c6c6;border-radius:27px"></div>
<svg style="position:absolute;left:2651.0px;top:1233.5px" width="44" height="44" viewBox="-22.0 -22.0 44 44" fill="none" stroke="#4a5c86" stroke-width="3.40" stroke-linecap="round" stroke-linejoin="round" ><path d="M-8 -12 V7 a5 5 0 0 0 10 0 V-7 a5 5 0 0 1 10 0 V9"/><circle cx="-8" cy="-12" r="4.6" fill="#4a5c86" stroke="none"/><circle cx="12" cy="11" r="4.6" fill="#4a5c86" stroke="none"/></svg>
<svg style="position:absolute;left:2863.5px;top:1234.0px" width="44" height="44" viewBox="-22.0 -22.0 44 44" fill="none" stroke="#4a5c86" stroke-width="3.20" stroke-linecap="round" stroke-linejoin="round" ><path d="M10 -8 A15.5 15.5 0 0 1 13.5 10.5 H-13.5 A15.5 15.5 0 0 1 4 -12.5"/><path d="M-1.5 4.5 L9.5 -7.5 L2.5 7 a3 3 0 0 1 -4 -2.5 Z" fill="#4a5c86" stroke="none"/></svg>
<svg style="position:absolute;left:3077px;top:1234px" width="44" height="44" viewBox="0 0 24 24"><path d="M19.35 10.04C18.67 6.59 15.64 4 12 4 9.11 4 6.6 5.64 5.35 8.04 2.34 8.36 0 10.91 0 14c0 3.31 2.69 6 6 6h13c2.76 0 5-2.24 5-5 0-2.64-2.05-4.78-4.65-4.96z" fill="#4a5c86"/></svg>
<div class="t" style="left:2623.5px;top:1295.0px;font-size:24.00px;letter-spacing:-0.488px;color:#1b1c21;"><b>6.2 miles</b></div>
<div class="t" style="left:2635.5px;top:1328.2px;font-size:18.70px;letter-spacing:0.392px;color:#68686e;">Distance</div>
<div class="t" style="left:2860.5px;top:1295.0px;font-size:24.00px;letter-spacing:-1.727px;color:#1b1c21;"><b>Hard</b></div>
<div class="t" style="left:2846.0px;top:1328.2px;font-size:18.70px;letter-spacing:1.020px;color:#68686e;">Difficulty</div>
<div class="t" style="left:3024.0px;top:1295.0px;font-size:24.00px;letter-spacing:-0.472px;color:#1b1c21;"><b>Very little</b></div>
<div class="t" style="left:3071.6px;top:1328.2px;font-size:18.70px;letter-spacing:0.082px;color:#68686e;">Shade</div>
<div class="t" style="left:2577.0px;top:1433.6px;font-size:27.00px;letter-spacing:-0.357px;color:#1b1c21;"><b>About the Trail</b></div>
<div class="t" style="left:2577.0px;top:1490.1px;font-size:27.00px;letter-spacing:0.951px;color:#45464c;">A popular and challenging hike offering</div>
<div class="t" style="left:2577.0px;top:1543.6px;font-size:27.00px;letter-spacing:0.895px;color:#45464c;">panoramic views of the Bay Area. The summit is</div>
<div class="t" style="left:2577.0px;top:1596.8px;font-size:27.00px;letter-spacing:0.987px;color:#45464c;">famous for its 'Mission Peeker' pole.</div>
<div style="position:absolute;left:2577.0px;top:1681.0px;width:618.0px;height:95.0px;background:#4a5c86;border-radius:28px"></div>
<svg style="position:absolute;left:2786px;top:1712px" width="30" height="34" viewBox="0 0 30 34"><path d="M15 2.5 L27 29.5 a1.2 1.2 0 0 1 -1.6 1.5 L15 26.5 L4.6 31 a1.2 1.2 0 0 1 -1.6 -1.5 Z" fill="#fff"/></svg>
<div class="t" style="left:2835.0px;top:1717.2px;font-size:23.00px;letter-spacing:-0.349px;color:#ffffff;"><b>START HIKING</b></div>
<div style="position:absolute;left:2794.0px;top:1834.0px;width:184.0px;height:7.0px;background:#5d5c63;border-radius:4px"></div>
</div></div>
<div style="position:absolute;left:3355.0px;top:1652.5px;width:54.5px;height:214.0px;box-sizing:border-box;border:1.6px solid #3c3e43;border-radius:7px;background:#191a1c"></div>
<svg style="position:absolute;left:3367.0px;top:1666.0px" width="30" height="30" viewBox="-15.0 -15.0 30 30" fill="none" stroke="#ced0d6" stroke-width="2.20" stroke-linecap="round" stroke-linejoin="round" ><path d="M-12 0 H12 M0 -12 V12"/></svg>
<div style="position:absolute;left:3370.0px;top:1732.0px;width:24.0px;height:2.0px;background:#54565b"></div>
<div class="t" style="left:3368.0px;top:1775.7px;font-size:22.00px;letter-spacing:0.000px;color:#dfe1e5;transform:scaleX(.84);transform-origin:0 0"><b>1:1</b></div>
<svg style="position:absolute;left:3367.0px;top:1823.0px" width="30" height="30" viewBox="-15.0 -15.0 30 30" fill="none" stroke="#54565b" stroke-width="2.00" stroke-linecap="round" stroke-linejoin="round" ><rect x="-11" y="-11" width="22" height="22" rx="3"/><path d="M-5.5 -1 V-5.5 H-1 M5.5 1 V5.5 H1"/></svg>
<!-- status -->
<div style="position:absolute;left:29.0px;top:1934.5px;width:14.5px;height:15.0px;box-sizing:border-box;border:2px solid #6f88ba;border-radius:3.5px;background:#3a3d42"></div>
<div class="t" style="left:53.0px;top:1926.9px;font-size:26.50px;letter-spacing:0.462px;color:#9da0a8;">hikesflash</div>
<svg style="position:absolute;left:187.0px;top:1928.0px" width="24" height="24" viewBox="-12.0 -12.0 24 24" fill="none" stroke="#9da0a8" stroke-width="2.20" stroke-linecap="round" stroke-linejoin="round" ><path d="M-4.5 -8 L4 0 L-4.5 8"/></svg>
<div class="t" style="left:224.2px;top:1926.9px;font-size:26.50px;letter-spacing:0.545px;color:#9da0a8;">.agent</div>
<svg style="position:absolute;left:314.0px;top:1928.0px" width="24" height="24" viewBox="-12.0 -12.0 24 24" fill="none" stroke="#9da0a8" stroke-width="2.20" stroke-linecap="round" stroke-linejoin="round" ><path d="M-4.5 -8 L4 0 L-4.5 8"/></svg>
<div class="t" style="left:351.0px;top:1931.2px;font-size:21.00px;letter-spacing:0.000px;color:#7890bd;"><b>M</b></div>
<svg style="position:absolute;left:364.0px;top:1928.0px" width="24" height="24" viewBox="-12.0 -12.0 24 24" fill="none" stroke="#7890bd" stroke-width="2.50" stroke-linecap="round" stroke-linejoin="round" ><path d="M0 -7.5 V7 M-4.5 2.5 L0 7.5 L4.5 2.5"/></svg>
<div class="t" style="left:390.7px;top:1926.9px;font-size:26.50px;letter-spacing:0.337px;color:#9da0a8;">plan.md</div>
<div class="t" style="left:2738.5px;top:1926.9px;font-size:26.50px;letter-spacing:-0.919px;color:#9da0a8;">4:1</div>
<div class="t" style="left:2807.0px;top:1926.9px;font-size:26.50px;letter-spacing:0.922px;color:#9da0a8;">.clang-tidy</div>
<svg style="position:absolute;left:2970.0px;top:1922.0px" width="36" height="36" viewBox="-18.0 -18.0 36 36" fill="none" stroke="#ced0d6" stroke-width="2.20" stroke-linecap="round" stroke-linejoin="round" ><path d="M-13 -5 H0 M-13 1.5 H4 M-13 8 H-3" stroke-width="3.2"/><circle cx="8.5" cy="-7" r="5.2" stroke-width="1.9"/><path d="M5 -3.5 L12 -10.5" stroke-width="1.9"/></svg>
<div class="t" style="left:3035.0px;top:1926.9px;font-size:26.50px;letter-spacing:-2.925px;color:#9da0a8;">LF</div>
<div class="t" style="left:3096.6px;top:1926.9px;font-size:26.50px;letter-spacing:0.731px;color:#9da0a8;">UTF-8</div>
<svg style="position:absolute;left:3202.0px;top:1921.0px" width="40" height="40" viewBox="-20.0 -20.0 40 40" fill="none" stroke="#ced0d6" stroke-width="2.20" stroke-linecap="round" stroke-linejoin="round" ><path d="M1 13 H-9 a3 3 0 0 1 -3 -3 V-11 a3 3 0 0 1 3 -3 H6 a3 3 0 0 1 3 3 V1"/><path d="M-7 -8 H4 M-7 -2.5 H4 M-7 3 H-2" stroke-width="1.9"/><circle cx="6.5" cy="8" r="4.3"/><path d="M9.7 11.2 L14 15.5"/></svg>
<div class="t" style="left:3249.0px;top:1926.9px;font-size:26.50px;letter-spacing:0.419px;color:#9da0a8;">2 spaces</div>
<svg style="position:absolute;left:3391.0px;top:1923.5px" width="36" height="36" viewBox="-18.0 -18.0 36 36" fill="none" stroke="#ced0d6" stroke-width="2.30" stroke-linecap="round" stroke-linejoin="round" ><rect x="-12.5" y="-1" width="20" height="13.5" rx="2.5"/><path d="M-2.5 3.5 V8"/><path d="M4 -1 V-5.5 a5 5 0 0 1 10 0 V-3"/></svg>
<svg style="position:absolute;left:3452.0px;top:1923.5px" width="36" height="36" viewBox="-18.0 -18.0 36 36" fill="none" stroke="#ced0d6" stroke-width="2.30" stroke-linecap="round" stroke-linejoin="round" ><circle cx="0" cy="0" r="12.5"/><path d="M0 -6.5 V1.5" stroke-width="3.2"/><circle cx="0" cy="6.5" r="1.9" fill="#ced0d6" stroke="none"/></svg>
</body></html>
